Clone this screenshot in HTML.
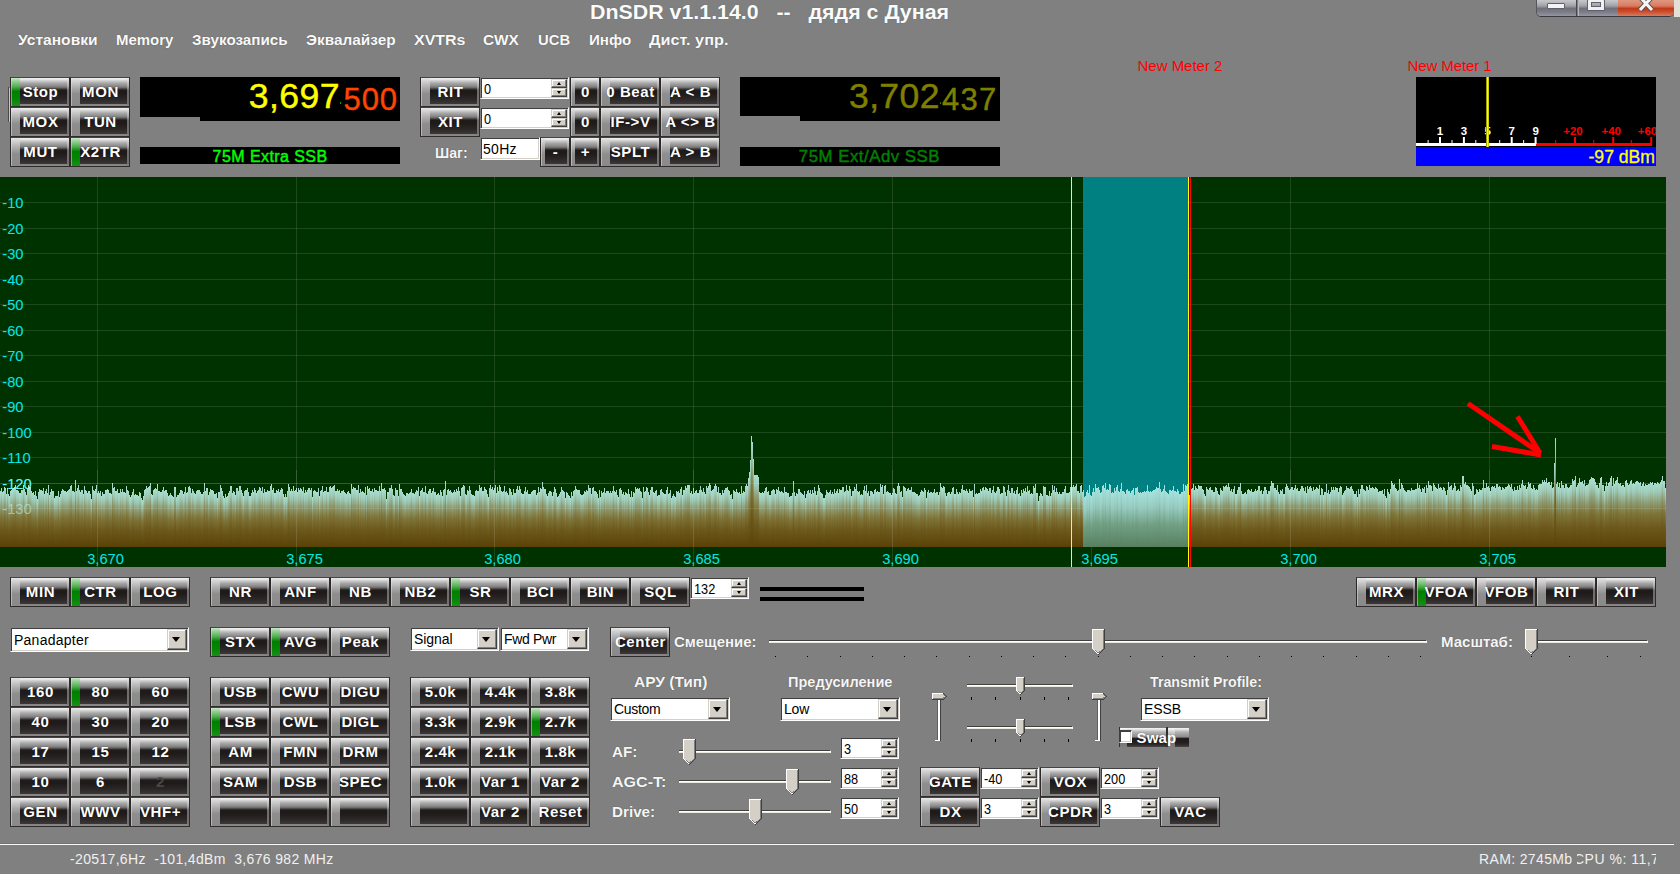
<!DOCTYPE html><html><head><meta charset="utf-8"><title>DnSDR</title><style>
*{margin:0;padding:0;box-sizing:border-box}
html,body{width:1680px;height:874px;overflow:hidden;background:#808080}
body{position:relative;font-family:"Liberation Sans",sans-serif;font-size:14px;color:#000}
.a{position:absolute}
/* skinned button */
.b{position:absolute;width:60px;height:30px;border:1px solid;border-color:#454343 #302c2c #302c2c #2c2828;overflow:hidden;letter-spacing:.6px;
 color:#fff;font-weight:bold;font-size:15px;line-height:28px;text-align:center;white-space:nowrap;
 background:linear-gradient(to bottom,#eee 0,#e8e8e8 5%,#d2d2d2 9%,#a8a8a8 18.5%,#8c8a8a 28.6%,#6e6c6c 34.4%,#454141 38.6%,#1f1b1b 43.5%,#1f1b1b 55%,#2b2727 75%,#3a3636 91%,#464242 92.5%,#858383 94%,#8a8888 100%);
 text-shadow:0 0 1px rgba(0,0,0,.55)}
.b:before{content:"";position:absolute;left:0;top:0;bottom:-1px;width:15.5%;box-shadow:inset 1px 0 0 rgba(235,235,235,.45);
 background:linear-gradient(to bottom,#e6e6e6 0,#d0d0d0 12%,#aaa 35%,#8e8e8e 55%,#8a8a8a 92%,#8c8c8c 100%)}
.b:after{content:"";position:absolute;right:0;top:0;bottom:0;width:2px;
 background:linear-gradient(to bottom,#e8e8e8 0,#b0b0b0 30%,#7c7a7a 45%,#7e7c7c 100%);opacity:.85}
.b.on:before{background:linear-gradient(to bottom,#c8e8c8 0,#9ad29a 10%,#4fae4f 30%,#008000 46%,#038503 70%,#1e901e 100%)}
.b.dis{color:#4a4646;text-shadow:none}
.b span{position:relative;z-index:2;left:.5px}
.b.n{width:30px}
/* classic win controls */
.sp,.cb,.tb{position:absolute;background:#fff;border:1px solid;border-color:#808080 #fff #fff #808080;
 box-shadow:inset 1px 1px 0 #404040,inset -1px -1px 0 #d4d0c8;font-size:14px;line-height:22px;padding-left:3px;white-space:nowrap;overflow:hidden}
.sb{position:absolute;right:1px;width:16px;height:9px;background:#d4d0c8;border:1px solid;border-color:#d4d0c8 #404040 #404040 #d4d0c8;box-shadow:inset -1px -1px 0 #808080,inset 1px 1px 0 #fff}
.sb i{position:absolute;left:4.5px;width:0;height:0;border-left:2.5px solid transparent;border-right:2.5px solid transparent}
.sb.u{top:1px}.sb.d{top:10px}
.sb.u i{top:2px;border-bottom:3px solid #000}
.sb.d i{top:2px;border-top:3px solid #000}
.db{position:absolute;right:1px;top:1px;bottom:1px;width:20px;background:#d4d0c8;border:1px solid;border-color:#d4d0c8 #404040 #404040 #d4d0c8;box-shadow:inset -1px -1px 0 #808080,inset 1px 1px 0 #fff}
.db i{position:absolute;left:4px;top:7px;width:0;height:0;border-left:4px solid transparent;border-right:4px solid transparent;border-top:5px solid #000}
.dg{display:inline-block;transform:scaleX(.91);transform-origin:0 50%}
.l{position:absolute;color:#f6f6f6;font-weight:bold;font-size:14px;line-height:16px;white-space:nowrap;text-shadow:0 0 1px rgba(40,40,40,.6)}
.m{position:absolute;color:#fafafa;font-weight:bold;font-size:14px;line-height:16px;white-space:nowrap;top:32px;text-shadow:0 0 1px rgba(40,40,40,.6)}
.pl{position:absolute;color:#00e8e8;font-size:14.7px;line-height:14px;white-space:nowrap}
</style></head><body>
<div class="a" style="left:590px;top:0;width:380px;height:24px;color:#fbfbfb;font-weight:bold;font-size:20px;line-height:24px;white-space:pre;text-shadow:0 0 1px rgba(60,60,60,.5);transform:scaleX(1.0686);transform-origin:0 0" id="title">DnSDR v1.1.14.0   --   дядя с Дуная</div>
<div class="m" style="left:17.8px;top:32px;transform:scaleX(1.1135);transform-origin:0 0">Установки</div>
<div class="m" style="left:115.8px;top:32px;transform:scaleX(1.0692);transform-origin:0 0">Memory</div>
<div class="m" style="left:191.8px;top:32px;transform:scaleX(1.0871);transform-origin:0 0">Звукозапись</div>
<div class="m" style="left:305.8px;top:32px;transform:scaleX(1.0983);transform-origin:0 0">Эквалайзер</div>
<div class="m" style="left:413.6px;top:32px;transform:scaleX(1.1391);transform-origin:0 0">XVTRs</div>
<div class="m" style="left:483.2px;top:32px;transform:scaleX(1.0957);transform-origin:0 0">CWX</div>
<div class="m" style="left:537.5px;top:32px;transform:scaleX(1.0579);transform-origin:0 0">UCB</div>
<div class="m" style="left:588.5px;top:32px;transform:scaleX(1.0807);transform-origin:0 0">Инфо</div>
<div class="m" style="left:648.8px;top:32px;transform:scaleX(1.1597);transform-origin:0 0">Дист. упр.</div>
<div class="a" style="left:1536px;top:0;width:138px;height:17px;border-radius:0 0 5px 5px;overflow:hidden;border-bottom:1px solid #3a3a40;border-left:1px solid #55555c"><div class="a" style="left:0;top:0;width:40px;height:17px;background:linear-gradient(#c8c8cc 0,#a0a0a8 35%,#70707c 50%,#7c7c88 70%,#9c9ca4 100%);border-right:1px solid #45454c"></div><div class="a" style="left:41px;top:0;width:40px;height:17px;background:linear-gradient(#c8c8cc 0,#a0a0a8 35%,#70707c 50%,#7c7c88 70%,#9c9ca4 100%);border-left:1px solid #b8b8c0"></div><div class="a" style="left:81px;top:0;width:57px;height:17px;background:linear-gradient(#e09880 0,#d87c60 35%,#c23a1c 50%,#c84828 65%,#dc8466 100%)"></div><div class="a" style="left:10px;top:3px;width:18px;height:6px;background:#f4f4f4;border:1px solid #60606c;border-radius:1px"></div><div class="a" style="left:51px;top:-1px;width:16px;height:11px;border:3px solid #f0f0f0;outline:1px solid #60606c;box-shadow:inset 0 0 0 1px #60606c"></div><svg class="a" style="left:100px;top:-3px" width="18" height="16" viewBox="0 0 18 16"><path d="M3 0L15 13M15 0L3 13" stroke="#5a4a4a" stroke-width="5" fill="none"/><path d="M3 0L15 13M15 0L3 13" stroke="#f4f4f4" stroke-width="3.2" fill="none"/></svg></div>
<div class="a" style="left:1674px;top:0;width:6px;height:17px;background:#e2dfd6"></div>
<div class="a" style="left:8px;top:87px;width:1px;height:35px;background:#4a4a4a"></div><div class="a" style="left:9px;top:88px;width:1px;height:34px;background:#c8c8c8"></div>
<div class="b on" style="left:10px;top:77px"><span>Stop</span></div>
<div class="b" style="left:70px;top:77px"><span>MON</span></div>
<div class="b" style="left:10px;top:107px"><span>MOX</span></div>
<div class="b" style="left:70px;top:107px"><span>TUN</span></div>
<div class="b" style="left:10px;top:137px"><span>MUT</span></div>
<div class="b on" style="left:70px;top:137px"><span>X2TR</span></div>
<div class="a" style="left:140px;top:77px;width:260px;height:40px;background:#000"></div><div class="a" style="left:200px;top:77px;width:200px;height:44px;background:#000"></div>
<div class="a" id="va1" style="left:248.8px;top:74.4px;color:#ff0;font-size:35.6px;line-height:44px;white-space:nowrap;-webkit-text-stroke:.45px #ff0;letter-spacing:0.43px">3,697</div>
<div class="a" id="va2" style="left:343.6px;top:77.7px;color:#ff4500;font-size:31px;line-height:44px;white-space:nowrap;-webkit-text-stroke:.4px #ff4500;letter-spacing:0.89px">500</div>
<div class="a" style="left:340px;top:102px;width:1px;height:2px;background:#0a0"></div>
<div class="a" style="left:140px;top:147px;width:260px;height:17px;background:#000"></div>
<div class="a" id="ba" style="left:212.6px;top:146.5px;color:#0f0;font-size:16px;line-height:19px;white-space:nowrap;-webkit-text-stroke:.45px #0f0;letter-spacing:0.43px">75M Extra SSB</div>
<div class="b" style="left:420px;top:77px"><span>RIT</span></div>
<div class="b" style="left:420px;top:107px"><span>XIT</span></div>
<div class="sp" style="left:480px;top:77px;width:89px;height:22px"><span class="dg">0</span><div class="sb u"><i></i></div><div class="sb d"><i></i></div></div>
<div class="sp" style="left:480px;top:107px;width:89px;height:22px"><span class="dg">0</span><div class="sb u"><i></i></div><div class="sb d"><i></i></div></div>
<div class="b n" style="left:570px;top:77px"><span>0</span></div>
<div class="b n" style="left:570px;top:107px"><span>0</span></div>
<div class="b" style="left:600px;top:77px"><span>0 Beat</span></div>
<div class="b" style="left:600px;top:107px"><span>IF-&gt;V</span></div>
<div class="b" style="left:600px;top:137px"><span>SPLT</span></div>
<div class="b" style="left:660px;top:77px"><span>A &lt; B</span></div>
<div class="b" style="left:660px;top:107px"><span>A &lt;&gt; B</span></div>
<div class="b" style="left:660px;top:137px"><span>A &gt; B</span></div>
<div class="b n" style="left:540px;top:137px"><span>-</span></div>
<div class="b n" style="left:570px;top:137px"><span>+</span></div>
<div class="l" style="left:434.5px;top:145px;transform:scaleX(1.0074);transform-origin:0 0">Шаг:</div>
<div class="tb" style="left:480px;top:137px;width:60px;height:23px;line-height:22px;padding-left:2px;letter-spacing:0.28px">50Hz</div>
<div class="a" style="left:740px;top:77px;width:260px;height:39px;background:#000"></div><div class="a" style="left:800px;top:77px;width:200px;height:44px;background:#000"></div>
<div class="a" id="vb1" style="left:849px;top:74.4px;color:#808000;font-size:35.6px;line-height:44px;white-space:nowrap;-webkit-text-stroke:.45px #808000;letter-spacing:0.35px">3,702</div>
<div class="a" id="vb2" style="left:942px;top:77.7px;color:#808000;font-size:31px;line-height:44px;white-space:nowrap;-webkit-text-stroke:.4px #808000;letter-spacing:1.26px">437</div>
<div class="a" style="left:940px;top:102px;width:1px;height:2px;background:#606000"></div>
<div class="a" style="left:740px;top:147px;width:260px;height:19px;background:#000"></div>
<div class="a" id="bb" style="left:798.8px;top:147px;color:#008000;font-size:16.8px;line-height:19px;white-space:nowrap;-webkit-text-stroke:.45px #008000;letter-spacing:0.52px">75M Ext/Adv SSB</div>
<div class="a" style="left:1137.5px;top:57px;color:#f00;font-size:15px;line-height:17px;white-space:nowrap;letter-spacing:-0.01px" id="nm2">New Meter 2</div>
<div class="a" style="left:1407.5px;top:57px;color:#f00;font-size:15px;line-height:17px;white-space:nowrap;letter-spacing:-0.10px" id="nm1">New Meter 1</div>
<svg class="a" style="left:1416px;top:77px" width="240" height="89" viewBox="0 0 240 89"><rect width="240" height="70" fill="#000"/><rect y="70" width="240" height="19" fill="#00f"/><rect x="0" y="66" width="120" height="3" fill="#fff"/><rect x="120" y="66" width="116" height="3" fill="#f00"/><rect x="11.6" y="63" width="1" height="4" fill="#fff"/><rect x="23.0" y="60" width="2" height="7" fill="#fff"/><rect x="35.5" y="63" width="1" height="4" fill="#fff"/><rect x="46.9" y="60" width="2" height="7" fill="#fff"/><rect x="59.3" y="63" width="1" height="4" fill="#fff"/><rect x="70.8" y="60" width="2" height="7" fill="#fff"/><rect x="83.2" y="63" width="1" height="4" fill="#fff"/><rect x="94.7" y="60" width="2" height="7" fill="#fff"/><rect x="107.1" y="63" width="1" height="4" fill="#fff"/><rect x="118.6" y="60" width="2" height="7" fill="#fff"/><rect x="139.2" y="63" width="1" height="4" fill="#f00"/><rect x="158.0" y="60" width="2" height="7" fill="#f00"/><rect x="177.2" y="63" width="1" height="4" fill="#f00"/><rect x="196.2" y="60" width="2" height="7" fill="#f00"/><rect x="214.8" y="63" width="1" height="4" fill="#f00"/><rect x="234.2" y="60" width="2" height="7" fill="#f00"/><g font-family="Liberation Sans" font-weight="bold" font-size="11.5" text-anchor="middle"><text x="24.0" y="58" fill="#fff">1</text><text x="47.9" y="58" fill="#fff">3</text><text x="71.8" y="58" fill="#fff">5</text><text x="95.7" y="58" fill="#fff">7</text><text x="119.6" y="58" fill="#fff">9</text><text x="157.0" y="58" fill="#f00">+20</text><text x="195.2" y="58" fill="#f00">+40</text><text x="231.5" y="58" fill="#f00">+60</text></g><rect x="70" y="0" width="3" height="70" fill="#ff0"/><rect x="70" y="0" width="1" height="70" fill="#a0a000"/><rect x="72.5" y="0" width=".5" height="70" fill="#a0a000"/><text x="239" y="86" fill="#ff0" font-family="Liberation Sans" font-size="17.6" text-anchor="end" stroke="#ff0" stroke-width=".3">-97 dBm</text></svg>
<svg class="a" style="left:0;top:177px" width="1666" height="390" viewBox="0 177 1666 390" shape-rendering="crispEdges"><defs><linearGradient id="g" x1="0" y1="0" x2="0" y2="1"><stop offset="0" stop-color="#aadfd3"/><stop offset=".14" stop-color="#9ecab6"/><stop offset=".30" stop-color="#8e9c74"/><stop offset=".48" stop-color="#7e7438"/><stop offset=".68" stop-color="#6e5a1e"/><stop offset="1" stop-color="#5a4206"/></linearGradient><linearGradient id="g2" x1="0" y1="0" x2="0" y2="1"><stop offset="0" stop-color="#a6e2de"/><stop offset=".3" stop-color="#96cabe"/><stop offset=".6" stop-color="#72a084"/><stop offset="1" stop-color="#588060"/></linearGradient></defs><rect x="0" y="177" width="1666" height="390" fill="#003200"/><rect x="0" y="202" width="1666" height="1" fill="#fff" fill-opacity=".11"/><rect x="0" y="228" width="1666" height="1" fill="#fff" fill-opacity=".11"/><rect x="0" y="253" width="1666" height="1" fill="#fff" fill-opacity=".11"/><rect x="0" y="279" width="1666" height="1" fill="#fff" fill-opacity=".11"/><rect x="0" y="304" width="1666" height="1" fill="#fff" fill-opacity=".11"/><rect x="0" y="330" width="1666" height="1" fill="#fff" fill-opacity=".11"/><rect x="0" y="355" width="1666" height="1" fill="#fff" fill-opacity=".11"/><rect x="0" y="381" width="1666" height="1" fill="#fff" fill-opacity=".11"/><rect x="0" y="406" width="1666" height="1" fill="#fff" fill-opacity=".11"/><rect x="0" y="432" width="1666" height="1" fill="#fff" fill-opacity=".11"/><rect x="0" y="457" width="1666" height="1" fill="#fff" fill-opacity=".11"/><rect x="0" y="483" width="1666" height="1" fill="#fff" fill-opacity=".11"/><rect x="0" y="508" width="1666" height="1" fill="#fff" fill-opacity=".11"/><rect x="97" y="177" width="1" height="390" fill="#fff" fill-opacity=".11"/><rect x="296" y="177" width="1" height="390" fill="#fff" fill-opacity=".11"/><rect x="494" y="177" width="1" height="390" fill="#fff" fill-opacity=".11"/><rect x="693" y="177" width="1" height="390" fill="#fff" fill-opacity=".11"/><rect x="892" y="177" width="1" height="390" fill="#fff" fill-opacity=".11"/><rect x="1091" y="177" width="1" height="390" fill="#fff" fill-opacity=".11"/><rect x="1290" y="177" width="1" height="390" fill="#fff" fill-opacity=".11"/><rect x="1489" y="177" width="1" height="390" fill="#fff" fill-opacity=".11"/><rect x="1083" y="177" width="105" height="370" fill="#008080"/><text x="2.3" y="489" font-family="Liberation Sans" font-size="14.7" fill="#00e8e8" shape-rendering="auto">-120</text><text x="2.3" y="514" font-family="Liberation Sans" font-size="14.7" fill="#00e8e8" shape-rendering="auto">-130</text><g fill="url(#g)"><rect x="0" y="491" width="1" height="56"/><rect x="1" y="488" width="1" height="59"/><rect x="2" y="492" width="1" height="55"/><rect x="3" y="491" width="1" height="56"/><rect x="4" y="487" width="1" height="60"/><rect x="5" y="488" width="1" height="59"/><rect x="6" y="494" width="1" height="53"/><rect x="7" y="488" width="1" height="59"/><rect x="8" y="494" width="1" height="53"/><rect x="9" y="496" width="1" height="51"/><rect x="10" y="491" width="1" height="56"/><rect x="11" y="490" width="1" height="57"/><rect x="12" y="489" width="1" height="58"/><rect x="13" y="488" width="1" height="59"/><rect x="14" y="487" width="1" height="60"/><rect x="15" y="485" width="1" height="62"/><rect x="16" y="490" width="1" height="57"/><rect x="17" y="490" width="1" height="57"/><rect x="18" y="491" width="1" height="56"/><rect x="19" y="493" width="1" height="54"/><rect x="20" y="493" width="1" height="54"/><rect x="21" y="490" width="1" height="57"/><rect x="22" y="490" width="1" height="57"/><rect x="23" y="485" width="1" height="62"/><rect x="24" y="489" width="1" height="58"/><rect x="25" y="492" width="1" height="55"/><rect x="26" y="495" width="1" height="52"/><rect x="27" y="489" width="1" height="58"/><rect x="28" y="485" width="1" height="62"/><rect x="29" y="487" width="1" height="60"/><rect x="30" y="487" width="1" height="60"/><rect x="31" y="491" width="1" height="56"/><rect x="32" y="493" width="1" height="54"/><rect x="33" y="492" width="1" height="55"/><rect x="34" y="495" width="1" height="52"/><rect x="35" y="491" width="1" height="56"/><rect x="36" y="496" width="1" height="51"/><rect x="37" y="499" width="1" height="48"/><rect x="38" y="492" width="1" height="55"/><rect x="39" y="489" width="1" height="58"/><rect x="40" y="490" width="1" height="57"/><rect x="41" y="490" width="1" height="57"/><rect x="42" y="491" width="1" height="56"/><rect x="43" y="488" width="1" height="59"/><rect x="44" y="494" width="1" height="53"/><rect x="45" y="491" width="1" height="56"/><rect x="46" y="489" width="1" height="58"/><rect x="47" y="493" width="1" height="54"/><rect x="48" y="485" width="1" height="62"/><rect x="49" y="495" width="1" height="52"/><rect x="50" y="492" width="1" height="55"/><rect x="51" y="489" width="1" height="58"/><rect x="52" y="491" width="1" height="56"/><rect x="53" y="491" width="1" height="56"/><rect x="54" y="498" width="1" height="49"/><rect x="55" y="496" width="1" height="51"/><rect x="56" y="496" width="1" height="51"/><rect x="57" y="496" width="1" height="51"/><rect x="58" y="491" width="1" height="56"/><rect x="59" y="497" width="1" height="50"/><rect x="60" y="494" width="1" height="53"/><rect x="61" y="491" width="1" height="56"/><rect x="62" y="489" width="1" height="58"/><rect x="63" y="490" width="1" height="57"/><rect x="64" y="491" width="1" height="56"/><rect x="65" y="491" width="1" height="56"/><rect x="66" y="492" width="1" height="55"/><rect x="67" y="491" width="1" height="56"/><rect x="68" y="490" width="1" height="57"/><rect x="69" y="489" width="1" height="58"/><rect x="70" y="486" width="1" height="61"/><rect x="71" y="485" width="1" height="62"/><rect x="72" y="491" width="1" height="56"/><rect x="73" y="491" width="1" height="56"/><rect x="74" y="492" width="1" height="55"/><rect x="75" y="480" width="1" height="67"/><rect x="76" y="491" width="1" height="56"/><rect x="77" y="488" width="1" height="59"/><rect x="78" y="485" width="1" height="62"/><rect x="79" y="490" width="1" height="57"/><rect x="80" y="492" width="1" height="55"/><rect x="81" y="490" width="1" height="57"/><rect x="82" y="490" width="1" height="57"/><rect x="83" y="494" width="1" height="53"/><rect x="84" y="486" width="1" height="61"/><rect x="85" y="490" width="1" height="57"/><rect x="86" y="491" width="1" height="56"/><rect x="87" y="493" width="1" height="54"/><rect x="88" y="491" width="1" height="56"/><rect x="89" y="491" width="1" height="56"/><rect x="90" y="494" width="1" height="53"/><rect x="91" y="499" width="1" height="48"/><rect x="92" y="486" width="1" height="61"/><rect x="93" y="490" width="1" height="57"/><rect x="94" y="491" width="1" height="56"/><rect x="95" y="489" width="1" height="58"/><rect x="96" y="485" width="1" height="62"/><rect x="97" y="493" width="1" height="54"/><rect x="98" y="491" width="1" height="56"/><rect x="99" y="493" width="1" height="54"/><rect x="100" y="491" width="1" height="56"/><rect x="101" y="496" width="1" height="51"/><rect x="102" y="492" width="1" height="55"/><rect x="103" y="494" width="1" height="53"/><rect x="104" y="494" width="1" height="53"/><rect x="105" y="490" width="1" height="57"/><rect x="106" y="490" width="1" height="57"/><rect x="107" y="489" width="1" height="58"/><rect x="108" y="490" width="1" height="57"/><rect x="109" y="493" width="1" height="54"/><rect x="110" y="493" width="1" height="54"/><rect x="111" y="494" width="1" height="53"/><rect x="112" y="483" width="1" height="64"/><rect x="113" y="488" width="1" height="59"/><rect x="114" y="487" width="1" height="60"/><rect x="115" y="491" width="1" height="56"/><rect x="116" y="491" width="1" height="56"/><rect x="117" y="489" width="1" height="58"/><rect x="118" y="493" width="1" height="54"/><rect x="119" y="493" width="1" height="54"/><rect x="120" y="489" width="1" height="58"/><rect x="121" y="492" width="1" height="55"/><rect x="122" y="489" width="1" height="58"/><rect x="123" y="492" width="1" height="55"/><rect x="124" y="492" width="1" height="55"/><rect x="125" y="493" width="1" height="54"/><rect x="126" y="486" width="1" height="61"/><rect x="127" y="490" width="1" height="57"/><rect x="128" y="491" width="1" height="56"/><rect x="129" y="495" width="1" height="52"/><rect x="130" y="497" width="1" height="50"/><rect x="131" y="495" width="1" height="52"/><rect x="132" y="492" width="1" height="55"/><rect x="133" y="489" width="1" height="58"/><rect x="134" y="495" width="1" height="52"/><rect x="135" y="494" width="1" height="53"/><rect x="136" y="495" width="1" height="52"/><rect x="137" y="495" width="1" height="52"/><rect x="138" y="496" width="1" height="51"/><rect x="139" y="492" width="1" height="55"/><rect x="140" y="493" width="1" height="54"/><rect x="141" y="498" width="1" height="49"/><rect x="142" y="500" width="1" height="47"/><rect x="143" y="496" width="1" height="51"/><rect x="144" y="490" width="1" height="57"/><rect x="145" y="489" width="1" height="58"/><rect x="146" y="486" width="1" height="61"/><rect x="147" y="488" width="1" height="59"/><rect x="148" y="487" width="1" height="60"/><rect x="149" y="486" width="1" height="61"/><rect x="150" y="483" width="1" height="64"/><rect x="151" y="494" width="1" height="53"/><rect x="152" y="495" width="1" height="52"/><rect x="153" y="490" width="1" height="57"/><rect x="154" y="489" width="1" height="58"/><rect x="155" y="488" width="1" height="59"/><rect x="156" y="489" width="1" height="58"/><rect x="157" y="484" width="1" height="63"/><rect x="158" y="491" width="1" height="56"/><rect x="159" y="491" width="1" height="56"/><rect x="160" y="492" width="1" height="55"/><rect x="161" y="492" width="1" height="55"/><rect x="162" y="490" width="1" height="57"/><rect x="163" y="487" width="1" height="60"/><rect x="164" y="491" width="1" height="56"/><rect x="165" y="490" width="1" height="57"/><rect x="166" y="490" width="1" height="57"/><rect x="167" y="493" width="1" height="54"/><rect x="168" y="496" width="1" height="51"/><rect x="169" y="495" width="1" height="52"/><rect x="170" y="493" width="1" height="54"/><rect x="171" y="495" width="1" height="52"/><rect x="172" y="496" width="1" height="51"/><rect x="173" y="497" width="1" height="50"/><rect x="174" y="487" width="1" height="60"/><rect x="175" y="487" width="1" height="60"/><rect x="176" y="497" width="1" height="50"/><rect x="177" y="495" width="1" height="52"/><rect x="178" y="495" width="1" height="52"/><rect x="179" y="493" width="1" height="54"/><rect x="180" y="490" width="1" height="57"/><rect x="181" y="490" width="1" height="57"/><rect x="182" y="491" width="1" height="56"/><rect x="183" y="494" width="1" height="53"/><rect x="184" y="492" width="1" height="55"/><rect x="185" y="487" width="1" height="60"/><rect x="186" y="493" width="1" height="54"/><rect x="187" y="492" width="1" height="55"/><rect x="188" y="487" width="1" height="60"/><rect x="189" y="486" width="1" height="61"/><rect x="190" y="488" width="1" height="59"/><rect x="191" y="493" width="1" height="54"/><rect x="192" y="489" width="1" height="58"/><rect x="193" y="491" width="1" height="56"/><rect x="194" y="493" width="1" height="54"/><rect x="195" y="494" width="1" height="53"/><rect x="196" y="491" width="1" height="56"/><rect x="197" y="490" width="1" height="57"/><rect x="198" y="490" width="1" height="57"/><rect x="199" y="490" width="1" height="57"/><rect x="200" y="492" width="1" height="55"/><rect x="201" y="494" width="1" height="53"/><rect x="202" y="494" width="1" height="53"/><rect x="203" y="492" width="1" height="55"/><rect x="204" y="483" width="1" height="64"/><rect x="205" y="491" width="1" height="56"/><rect x="206" y="488" width="1" height="59"/><rect x="207" y="488" width="1" height="59"/><rect x="208" y="495" width="1" height="52"/><rect x="209" y="492" width="1" height="55"/><rect x="210" y="489" width="1" height="58"/><rect x="211" y="490" width="1" height="57"/><rect x="212" y="490" width="1" height="57"/><rect x="213" y="491" width="1" height="56"/><rect x="214" y="494" width="1" height="53"/><rect x="215" y="494" width="1" height="53"/><rect x="216" y="493" width="1" height="54"/><rect x="217" y="498" width="1" height="49"/><rect x="218" y="492" width="1" height="55"/><rect x="219" y="492" width="1" height="55"/><rect x="220" y="485" width="1" height="62"/><rect x="221" y="488" width="1" height="59"/><rect x="222" y="491" width="1" height="56"/><rect x="223" y="496" width="1" height="51"/><rect x="224" y="498" width="1" height="49"/><rect x="225" y="494" width="1" height="53"/><rect x="226" y="497" width="1" height="50"/><rect x="227" y="496" width="1" height="51"/><rect x="228" y="493" width="1" height="54"/><rect x="229" y="491" width="1" height="56"/><rect x="230" y="486" width="1" height="61"/><rect x="231" y="486" width="1" height="61"/><rect x="232" y="493" width="1" height="54"/><rect x="233" y="491" width="1" height="56"/><rect x="234" y="492" width="1" height="55"/><rect x="235" y="495" width="1" height="52"/><rect x="236" y="488" width="1" height="59"/><rect x="237" y="488" width="1" height="59"/><rect x="238" y="491" width="1" height="56"/><rect x="239" y="486" width="1" height="61"/><rect x="240" y="486" width="1" height="61"/><rect x="241" y="490" width="1" height="57"/><rect x="242" y="493" width="1" height="54"/><rect x="243" y="496" width="1" height="51"/><rect x="244" y="491" width="1" height="56"/><rect x="245" y="490" width="1" height="57"/><rect x="246" y="490" width="1" height="57"/><rect x="247" y="488" width="1" height="59"/><rect x="248" y="492" width="1" height="55"/><rect x="249" y="496" width="1" height="51"/><rect x="250" y="496" width="1" height="51"/><rect x="251" y="493" width="1" height="54"/><rect x="252" y="490" width="1" height="57"/><rect x="253" y="492" width="1" height="55"/><rect x="254" y="488" width="1" height="59"/><rect x="255" y="490" width="1" height="57"/><rect x="256" y="493" width="1" height="54"/><rect x="257" y="491" width="1" height="56"/><rect x="258" y="490" width="1" height="57"/><rect x="259" y="487" width="1" height="60"/><rect x="260" y="488" width="1" height="59"/><rect x="261" y="491" width="1" height="56"/><rect x="262" y="487" width="1" height="60"/><rect x="263" y="493" width="1" height="54"/><rect x="264" y="489" width="1" height="58"/><rect x="265" y="492" width="1" height="55"/><rect x="266" y="492" width="1" height="55"/><rect x="267" y="490" width="1" height="57"/><rect x="268" y="491" width="1" height="56"/><rect x="269" y="491" width="1" height="56"/><rect x="270" y="486" width="1" height="61"/><rect x="271" y="484" width="1" height="63"/><rect x="272" y="490" width="1" height="57"/><rect x="273" y="488" width="1" height="59"/><rect x="274" y="493" width="1" height="54"/><rect x="275" y="493" width="1" height="54"/><rect x="276" y="490" width="1" height="57"/><rect x="277" y="491" width="1" height="56"/><rect x="278" y="489" width="1" height="58"/><rect x="279" y="492" width="1" height="55"/><rect x="280" y="490" width="1" height="57"/><rect x="281" y="488" width="1" height="59"/><rect x="282" y="489" width="1" height="58"/><rect x="283" y="494" width="1" height="53"/><rect x="284" y="497" width="1" height="50"/><rect x="285" y="494" width="1" height="53"/><rect x="286" y="497" width="1" height="50"/><rect x="287" y="491" width="1" height="56"/><rect x="288" y="484" width="1" height="63"/><rect x="289" y="487" width="1" height="60"/><rect x="290" y="491" width="1" height="56"/><rect x="291" y="489" width="1" height="58"/><rect x="292" y="491" width="1" height="56"/><rect x="293" y="486" width="1" height="61"/><rect x="294" y="491" width="1" height="56"/><rect x="295" y="490" width="1" height="57"/><rect x="296" y="488" width="1" height="59"/><rect x="297" y="492" width="1" height="55"/><rect x="298" y="488" width="1" height="59"/><rect x="299" y="490" width="1" height="57"/><rect x="300" y="488" width="1" height="59"/><rect x="301" y="489" width="1" height="58"/><rect x="302" y="491" width="1" height="56"/><rect x="303" y="487" width="1" height="60"/><rect x="304" y="493" width="1" height="54"/><rect x="305" y="490" width="1" height="57"/><rect x="306" y="492" width="1" height="55"/><rect x="307" y="490" width="1" height="57"/><rect x="308" y="488" width="1" height="59"/><rect x="309" y="488" width="1" height="59"/><rect x="310" y="490" width="1" height="57"/><rect x="311" y="488" width="1" height="59"/><rect x="312" y="497" width="1" height="50"/><rect x="313" y="491" width="1" height="56"/><rect x="314" y="490" width="1" height="57"/><rect x="315" y="491" width="1" height="56"/><rect x="316" y="492" width="1" height="55"/><rect x="317" y="492" width="1" height="55"/><rect x="318" y="488" width="1" height="59"/><rect x="319" y="496" width="1" height="51"/><rect x="320" y="491" width="1" height="56"/><rect x="321" y="490" width="1" height="57"/><rect x="322" y="486" width="1" height="61"/><rect x="323" y="492" width="1" height="55"/><rect x="324" y="491" width="1" height="56"/><rect x="325" y="491" width="1" height="56"/><rect x="326" y="487" width="1" height="60"/><rect x="327" y="492" width="1" height="55"/><rect x="328" y="492" width="1" height="55"/><rect x="329" y="487" width="1" height="60"/><rect x="330" y="486" width="1" height="61"/><rect x="331" y="488" width="1" height="59"/><rect x="332" y="487" width="1" height="60"/><rect x="333" y="486" width="1" height="61"/><rect x="334" y="485" width="1" height="62"/><rect x="335" y="491" width="1" height="56"/><rect x="336" y="491" width="1" height="56"/><rect x="337" y="489" width="1" height="58"/><rect x="338" y="491" width="1" height="56"/><rect x="339" y="490" width="1" height="57"/><rect x="340" y="493" width="1" height="54"/><rect x="341" y="491" width="1" height="56"/><rect x="342" y="491" width="1" height="56"/><rect x="343" y="490" width="1" height="57"/><rect x="344" y="492" width="1" height="55"/><rect x="345" y="493" width="1" height="54"/><rect x="346" y="494" width="1" height="53"/><rect x="347" y="492" width="1" height="55"/><rect x="348" y="491" width="1" height="56"/><rect x="349" y="493" width="1" height="54"/><rect x="350" y="494" width="1" height="53"/><rect x="351" y="484" width="1" height="63"/><rect x="352" y="489" width="1" height="58"/><rect x="353" y="487" width="1" height="60"/><rect x="354" y="488" width="1" height="59"/><rect x="355" y="488" width="1" height="59"/><rect x="356" y="490" width="1" height="57"/><rect x="357" y="490" width="1" height="57"/><rect x="358" y="485" width="1" height="62"/><rect x="359" y="493" width="1" height="54"/><rect x="360" y="489" width="1" height="58"/><rect x="361" y="492" width="1" height="55"/><rect x="362" y="491" width="1" height="56"/><rect x="363" y="492" width="1" height="55"/><rect x="364" y="493" width="1" height="54"/><rect x="365" y="487" width="1" height="60"/><rect x="366" y="495" width="1" height="52"/><rect x="367" y="486" width="1" height="61"/><rect x="368" y="489" width="1" height="58"/><rect x="369" y="488" width="1" height="59"/><rect x="370" y="491" width="1" height="56"/><rect x="371" y="491" width="1" height="56"/><rect x="372" y="489" width="1" height="58"/><rect x="373" y="492" width="1" height="55"/><rect x="374" y="488" width="1" height="59"/><rect x="375" y="490" width="1" height="57"/><rect x="376" y="490" width="1" height="57"/><rect x="377" y="491" width="1" height="56"/><rect x="378" y="491" width="1" height="56"/><rect x="379" y="486" width="1" height="61"/><rect x="380" y="491" width="1" height="56"/><rect x="381" y="483" width="1" height="64"/><rect x="382" y="489" width="1" height="58"/><rect x="383" y="489" width="1" height="58"/><rect x="384" y="488" width="1" height="59"/><rect x="385" y="490" width="1" height="57"/><rect x="386" y="499" width="1" height="48"/><rect x="387" y="492" width="1" height="55"/><rect x="388" y="492" width="1" height="55"/><rect x="389" y="488" width="1" height="59"/><rect x="390" y="488" width="1" height="59"/><rect x="391" y="485" width="1" height="62"/><rect x="392" y="489" width="1" height="58"/><rect x="393" y="495" width="1" height="52"/><rect x="394" y="496" width="1" height="51"/><rect x="395" y="488" width="1" height="59"/><rect x="396" y="490" width="1" height="57"/><rect x="397" y="490" width="1" height="57"/><rect x="398" y="496" width="1" height="51"/><rect x="399" y="484" width="1" height="63"/><rect x="400" y="489" width="1" height="58"/><rect x="401" y="489" width="1" height="58"/><rect x="402" y="492" width="1" height="55"/><rect x="403" y="494" width="1" height="53"/><rect x="404" y="495" width="1" height="52"/><rect x="405" y="496" width="1" height="51"/><rect x="406" y="493" width="1" height="54"/><rect x="407" y="493" width="1" height="54"/><rect x="408" y="494" width="1" height="53"/><rect x="409" y="493" width="1" height="54"/><rect x="410" y="492" width="1" height="55"/><rect x="411" y="489" width="1" height="58"/><rect x="412" y="493" width="1" height="54"/><rect x="413" y="493" width="1" height="54"/><rect x="414" y="494" width="1" height="53"/><rect x="415" y="492" width="1" height="55"/><rect x="416" y="490" width="1" height="57"/><rect x="417" y="491" width="1" height="56"/><rect x="418" y="487" width="1" height="60"/><rect x="419" y="496" width="1" height="51"/><rect x="420" y="491" width="1" height="56"/><rect x="421" y="490" width="1" height="57"/><rect x="422" y="488" width="1" height="59"/><rect x="423" y="492" width="1" height="55"/><rect x="424" y="492" width="1" height="55"/><rect x="425" y="486" width="1" height="61"/><rect x="426" y="493" width="1" height="54"/><rect x="427" y="494" width="1" height="53"/><rect x="428" y="491" width="1" height="56"/><rect x="429" y="489" width="1" height="58"/><rect x="430" y="489" width="1" height="58"/><rect x="431" y="493" width="1" height="54"/><rect x="432" y="491" width="1" height="56"/><rect x="433" y="488" width="1" height="59"/><rect x="434" y="492" width="1" height="55"/><rect x="435" y="492" width="1" height="55"/><rect x="436" y="495" width="1" height="52"/><rect x="437" y="494" width="1" height="53"/><rect x="438" y="493" width="1" height="54"/><rect x="439" y="495" width="1" height="52"/><rect x="440" y="490" width="1" height="57"/><rect x="441" y="492" width="1" height="55"/><rect x="442" y="496" width="1" height="51"/><rect x="443" y="490" width="1" height="57"/><rect x="444" y="489" width="1" height="58"/><rect x="445" y="481" width="1" height="66"/><rect x="446" y="495" width="1" height="52"/><rect x="447" y="490" width="1" height="57"/><rect x="448" y="489" width="1" height="58"/><rect x="449" y="491" width="1" height="56"/><rect x="450" y="490" width="1" height="57"/><rect x="451" y="492" width="1" height="55"/><rect x="452" y="493" width="1" height="54"/><rect x="453" y="492" width="1" height="55"/><rect x="454" y="490" width="1" height="57"/><rect x="455" y="492" width="1" height="55"/><rect x="456" y="489" width="1" height="58"/><rect x="457" y="491" width="1" height="56"/><rect x="458" y="487" width="1" height="60"/><rect x="459" y="491" width="1" height="56"/><rect x="460" y="496" width="1" height="51"/><rect x="461" y="488" width="1" height="59"/><rect x="462" y="487" width="1" height="60"/><rect x="463" y="485" width="1" height="62"/><rect x="464" y="486" width="1" height="61"/><rect x="465" y="494" width="1" height="53"/><rect x="466" y="495" width="1" height="52"/><rect x="467" y="490" width="1" height="57"/><rect x="468" y="491" width="1" height="56"/><rect x="469" y="486" width="1" height="61"/><rect x="470" y="490" width="1" height="57"/><rect x="471" y="494" width="1" height="53"/><rect x="472" y="495" width="1" height="52"/><rect x="473" y="495" width="1" height="52"/><rect x="474" y="496" width="1" height="51"/><rect x="475" y="491" width="1" height="56"/><rect x="476" y="490" width="1" height="57"/><rect x="477" y="491" width="1" height="56"/><rect x="478" y="491" width="1" height="56"/><rect x="479" y="485" width="1" height="62"/><rect x="480" y="488" width="1" height="59"/><rect x="481" y="487" width="1" height="60"/><rect x="482" y="491" width="1" height="56"/><rect x="483" y="491" width="1" height="56"/><rect x="484" y="487" width="1" height="60"/><rect x="485" y="489" width="1" height="58"/><rect x="486" y="490" width="1" height="57"/><rect x="487" y="494" width="1" height="53"/><rect x="488" y="497" width="1" height="50"/><rect x="489" y="488" width="1" height="59"/><rect x="490" y="485" width="1" height="62"/><rect x="491" y="489" width="1" height="58"/><rect x="492" y="487" width="1" height="60"/><rect x="493" y="490" width="1" height="57"/><rect x="494" y="488" width="1" height="59"/><rect x="495" y="485" width="1" height="62"/><rect x="496" y="493" width="1" height="54"/><rect x="497" y="487" width="1" height="60"/><rect x="498" y="491" width="1" height="56"/><rect x="499" y="485" width="1" height="62"/><rect x="500" y="487" width="1" height="60"/><rect x="501" y="491" width="1" height="56"/><rect x="502" y="492" width="1" height="55"/><rect x="503" y="491" width="1" height="56"/><rect x="504" y="486" width="1" height="61"/><rect x="505" y="492" width="1" height="55"/><rect x="506" y="491" width="1" height="56"/><rect x="507" y="493" width="1" height="54"/><rect x="508" y="495" width="1" height="52"/><rect x="509" y="488" width="1" height="59"/><rect x="510" y="489" width="1" height="58"/><rect x="511" y="492" width="1" height="55"/><rect x="512" y="495" width="1" height="52"/><rect x="513" y="489" width="1" height="58"/><rect x="514" y="493" width="1" height="54"/><rect x="515" y="493" width="1" height="54"/><rect x="516" y="489" width="1" height="58"/><rect x="517" y="486" width="1" height="61"/><rect x="518" y="490" width="1" height="57"/><rect x="519" y="486" width="1" height="61"/><rect x="520" y="489" width="1" height="58"/><rect x="521" y="493" width="1" height="54"/><rect x="522" y="494" width="1" height="53"/><rect x="523" y="494" width="1" height="53"/><rect x="524" y="491" width="1" height="56"/><rect x="525" y="487" width="1" height="60"/><rect x="526" y="492" width="1" height="55"/><rect x="527" y="490" width="1" height="57"/><rect x="528" y="494" width="1" height="53"/><rect x="529" y="494" width="1" height="53"/><rect x="530" y="494" width="1" height="53"/><rect x="531" y="492" width="1" height="55"/><rect x="532" y="491" width="1" height="56"/><rect x="533" y="490" width="1" height="57"/><rect x="534" y="490" width="1" height="57"/><rect x="535" y="490" width="1" height="57"/><rect x="536" y="495" width="1" height="52"/><rect x="537" y="493" width="1" height="54"/><rect x="538" y="487" width="1" height="60"/><rect x="539" y="492" width="1" height="55"/><rect x="540" y="488" width="1" height="59"/><rect x="541" y="489" width="1" height="58"/><rect x="542" y="482" width="1" height="65"/><rect x="543" y="487" width="1" height="60"/><rect x="544" y="489" width="1" height="58"/><rect x="545" y="489" width="1" height="58"/><rect x="546" y="494" width="1" height="53"/><rect x="547" y="496" width="1" height="51"/><rect x="548" y="493" width="1" height="54"/><rect x="549" y="491" width="1" height="56"/><rect x="550" y="491" width="1" height="56"/><rect x="551" y="492" width="1" height="55"/><rect x="552" y="496" width="1" height="51"/><rect x="553" y="492" width="1" height="55"/><rect x="554" y="487" width="1" height="60"/><rect x="555" y="489" width="1" height="58"/><rect x="556" y="493" width="1" height="54"/><rect x="557" y="497" width="1" height="50"/><rect x="558" y="496" width="1" height="51"/><rect x="559" y="494" width="1" height="53"/><rect x="560" y="492" width="1" height="55"/><rect x="561" y="487" width="1" height="60"/><rect x="562" y="490" width="1" height="57"/><rect x="563" y="491" width="1" height="56"/><rect x="564" y="492" width="1" height="55"/><rect x="565" y="498" width="1" height="49"/><rect x="566" y="492" width="1" height="55"/><rect x="567" y="493" width="1" height="54"/><rect x="568" y="495" width="1" height="52"/><rect x="569" y="496" width="1" height="51"/><rect x="570" y="498" width="1" height="49"/><rect x="571" y="492" width="1" height="55"/><rect x="572" y="496" width="1" height="51"/><rect x="573" y="491" width="1" height="56"/><rect x="574" y="490" width="1" height="57"/><rect x="575" y="486" width="1" height="61"/><rect x="576" y="489" width="1" height="58"/><rect x="577" y="490" width="1" height="57"/><rect x="578" y="490" width="1" height="57"/><rect x="579" y="490" width="1" height="57"/><rect x="580" y="494" width="1" height="53"/><rect x="581" y="495" width="1" height="52"/><rect x="582" y="495" width="1" height="52"/><rect x="583" y="494" width="1" height="53"/><rect x="584" y="491" width="1" height="56"/><rect x="585" y="492" width="1" height="55"/><rect x="586" y="490" width="1" height="57"/><rect x="587" y="491" width="1" height="56"/><rect x="588" y="485" width="1" height="62"/><rect x="589" y="488" width="1" height="59"/><rect x="590" y="488" width="1" height="59"/><rect x="591" y="494" width="1" height="53"/><rect x="592" y="488" width="1" height="59"/><rect x="593" y="487" width="1" height="60"/><rect x="594" y="491" width="1" height="56"/><rect x="595" y="491" width="1" height="56"/><rect x="596" y="492" width="1" height="55"/><rect x="597" y="494" width="1" height="53"/><rect x="598" y="498" width="1" height="49"/><rect x="599" y="490" width="1" height="57"/><rect x="600" y="497" width="1" height="50"/><rect x="601" y="491" width="1" height="56"/><rect x="602" y="493" width="1" height="54"/><rect x="603" y="492" width="1" height="55"/><rect x="604" y="488" width="1" height="59"/><rect x="605" y="493" width="1" height="54"/><rect x="606" y="491" width="1" height="56"/><rect x="607" y="491" width="1" height="56"/><rect x="608" y="491" width="1" height="56"/><rect x="609" y="493" width="1" height="54"/><rect x="610" y="491" width="1" height="56"/><rect x="611" y="493" width="1" height="54"/><rect x="612" y="491" width="1" height="56"/><rect x="613" y="486" width="1" height="61"/><rect x="614" y="491" width="1" height="56"/><rect x="615" y="492" width="1" height="55"/><rect x="616" y="490" width="1" height="57"/><rect x="617" y="495" width="1" height="52"/><rect x="618" y="497" width="1" height="50"/><rect x="619" y="489" width="1" height="58"/><rect x="620" y="488" width="1" height="59"/><rect x="621" y="490" width="1" height="57"/><rect x="622" y="494" width="1" height="53"/><rect x="623" y="492" width="1" height="55"/><rect x="624" y="495" width="1" height="52"/><rect x="625" y="492" width="1" height="55"/><rect x="626" y="493" width="1" height="54"/><rect x="627" y="494" width="1" height="53"/><rect x="628" y="489" width="1" height="58"/><rect x="629" y="494" width="1" height="53"/><rect x="630" y="497" width="1" height="50"/><rect x="631" y="491" width="1" height="56"/><rect x="632" y="497" width="1" height="50"/><rect x="633" y="492" width="1" height="55"/><rect x="634" y="493" width="1" height="54"/><rect x="635" y="487" width="1" height="60"/><rect x="636" y="489" width="1" height="58"/><rect x="637" y="488" width="1" height="59"/><rect x="638" y="489" width="1" height="58"/><rect x="639" y="488" width="1" height="59"/><rect x="640" y="491" width="1" height="56"/><rect x="641" y="492" width="1" height="55"/><rect x="642" y="498" width="1" height="49"/><rect x="643" y="487" width="1" height="60"/><rect x="644" y="492" width="1" height="55"/><rect x="645" y="491" width="1" height="56"/><rect x="646" y="487" width="1" height="60"/><rect x="647" y="488" width="1" height="59"/><rect x="648" y="492" width="1" height="55"/><rect x="649" y="495" width="1" height="52"/><rect x="650" y="490" width="1" height="57"/><rect x="651" y="487" width="1" height="60"/><rect x="652" y="487" width="1" height="60"/><rect x="653" y="492" width="1" height="55"/><rect x="654" y="493" width="1" height="54"/><rect x="655" y="491" width="1" height="56"/><rect x="656" y="490" width="1" height="57"/><rect x="657" y="496" width="1" height="51"/><rect x="658" y="495" width="1" height="52"/><rect x="659" y="495" width="1" height="52"/><rect x="660" y="490" width="1" height="57"/><rect x="661" y="489" width="1" height="58"/><rect x="662" y="492" width="1" height="55"/><rect x="663" y="493" width="1" height="54"/><rect x="664" y="494" width="1" height="53"/><rect x="665" y="494" width="1" height="53"/><rect x="666" y="490" width="1" height="57"/><rect x="667" y="487" width="1" height="60"/><rect x="668" y="494" width="1" height="53"/><rect x="669" y="493" width="1" height="54"/><rect x="670" y="490" width="1" height="57"/><rect x="671" y="498" width="1" height="49"/><rect x="672" y="496" width="1" height="51"/><rect x="673" y="494" width="1" height="53"/><rect x="674" y="496" width="1" height="51"/><rect x="675" y="497" width="1" height="50"/><rect x="676" y="491" width="1" height="56"/><rect x="677" y="492" width="1" height="55"/><rect x="678" y="491" width="1" height="56"/><rect x="679" y="493" width="1" height="54"/><rect x="680" y="489" width="1" height="58"/><rect x="681" y="487" width="1" height="60"/><rect x="682" y="495" width="1" height="52"/><rect x="683" y="490" width="1" height="57"/><rect x="684" y="490" width="1" height="57"/><rect x="685" y="486" width="1" height="61"/><rect x="686" y="488" width="1" height="59"/><rect x="687" y="485" width="1" height="62"/><rect x="688" y="485" width="1" height="62"/><rect x="689" y="485" width="1" height="62"/><rect x="690" y="493" width="1" height="54"/><rect x="691" y="491" width="1" height="56"/><rect x="692" y="494" width="1" height="53"/><rect x="693" y="488" width="1" height="59"/><rect x="694" y="493" width="1" height="54"/><rect x="695" y="491" width="1" height="56"/><rect x="696" y="490" width="1" height="57"/><rect x="697" y="493" width="1" height="54"/><rect x="698" y="493" width="1" height="54"/><rect x="699" y="490" width="1" height="57"/><rect x="700" y="486" width="1" height="61"/><rect x="701" y="490" width="1" height="57"/><rect x="702" y="492" width="1" height="55"/><rect x="703" y="488" width="1" height="59"/><rect x="704" y="492" width="1" height="55"/><rect x="705" y="494" width="1" height="53"/><rect x="706" y="486" width="1" height="61"/><rect x="707" y="488" width="1" height="59"/><rect x="708" y="486" width="1" height="61"/><rect x="709" y="483" width="1" height="64"/><rect x="710" y="485" width="1" height="62"/><rect x="711" y="491" width="1" height="56"/><rect x="712" y="490" width="1" height="57"/><rect x="713" y="489" width="1" height="58"/><rect x="714" y="486" width="1" height="61"/><rect x="715" y="484" width="1" height="63"/><rect x="716" y="486" width="1" height="61"/><rect x="717" y="492" width="1" height="55"/><rect x="718" y="487" width="1" height="60"/><rect x="719" y="493" width="1" height="54"/><rect x="720" y="493" width="1" height="54"/><rect x="721" y="495" width="1" height="52"/><rect x="722" y="490" width="1" height="57"/><rect x="723" y="493" width="1" height="54"/><rect x="724" y="490" width="1" height="57"/><rect x="725" y="488" width="1" height="59"/><rect x="726" y="488" width="1" height="59"/><rect x="727" y="487" width="1" height="60"/><rect x="728" y="490" width="1" height="57"/><rect x="729" y="491" width="1" height="56"/><rect x="730" y="495" width="1" height="52"/><rect x="731" y="494" width="1" height="53"/><rect x="732" y="499" width="1" height="48"/><rect x="733" y="490" width="1" height="57"/><rect x="734" y="491" width="1" height="56"/><rect x="735" y="492" width="1" height="55"/><rect x="736" y="489" width="1" height="58"/><rect x="737" y="492" width="1" height="55"/><rect x="738" y="493" width="1" height="54"/><rect x="739" y="492" width="1" height="55"/><rect x="740" y="494" width="1" height="53"/><rect x="741" y="486" width="1" height="61"/><rect x="742" y="493" width="1" height="54"/><rect x="743" y="491" width="1" height="56"/><rect x="744" y="492" width="1" height="55"/><rect x="745" y="486" width="1" height="61"/><rect x="746" y="484" width="1" height="63"/><rect x="747" y="486" width="1" height="61"/><rect x="748" y="478" width="1" height="69"/><rect x="749" y="472" width="1" height="75"/><rect x="750" y="460" width="1" height="87"/><rect x="751" y="436" width="1" height="111"/><rect x="752" y="442" width="1" height="105"/><rect x="753" y="459" width="1" height="88"/><rect x="754" y="475" width="1" height="72"/><rect x="755" y="475" width="1" height="72"/><rect x="756" y="475" width="1" height="72"/><rect x="757" y="475" width="1" height="72"/><rect x="758" y="477" width="1" height="70"/><rect x="759" y="492" width="1" height="55"/><rect x="760" y="493" width="1" height="54"/><rect x="761" y="493" width="1" height="54"/><rect x="762" y="492" width="1" height="55"/><rect x="763" y="493" width="1" height="54"/><rect x="764" y="491" width="1" height="56"/><rect x="765" y="488" width="1" height="59"/><rect x="766" y="487" width="1" height="60"/><rect x="767" y="492" width="1" height="55"/><rect x="768" y="491" width="1" height="56"/><rect x="769" y="495" width="1" height="52"/><rect x="770" y="495" width="1" height="52"/><rect x="771" y="491" width="1" height="56"/><rect x="772" y="490" width="1" height="57"/><rect x="773" y="489" width="1" height="58"/><rect x="774" y="490" width="1" height="57"/><rect x="775" y="494" width="1" height="53"/><rect x="776" y="489" width="1" height="58"/><rect x="777" y="490" width="1" height="57"/><rect x="778" y="487" width="1" height="60"/><rect x="779" y="491" width="1" height="56"/><rect x="780" y="492" width="1" height="55"/><rect x="781" y="491" width="1" height="56"/><rect x="782" y="492" width="1" height="55"/><rect x="783" y="493" width="1" height="54"/><rect x="784" y="487" width="1" height="60"/><rect x="785" y="492" width="1" height="55"/><rect x="786" y="492" width="1" height="55"/><rect x="787" y="493" width="1" height="54"/><rect x="788" y="493" width="1" height="54"/><rect x="789" y="497" width="1" height="50"/><rect x="790" y="496" width="1" height="51"/><rect x="791" y="496" width="1" height="51"/><rect x="792" y="493" width="1" height="54"/><rect x="793" y="481" width="1" height="66"/><rect x="794" y="492" width="1" height="55"/><rect x="795" y="496" width="1" height="51"/><rect x="796" y="493" width="1" height="54"/><rect x="797" y="494" width="1" height="53"/><rect x="798" y="489" width="1" height="58"/><rect x="799" y="489" width="1" height="58"/><rect x="800" y="492" width="1" height="55"/><rect x="801" y="493" width="1" height="54"/><rect x="802" y="494" width="1" height="53"/><rect x="803" y="495" width="1" height="52"/><rect x="804" y="491" width="1" height="56"/><rect x="805" y="498" width="1" height="49"/><rect x="806" y="494" width="1" height="53"/><rect x="807" y="491" width="1" height="56"/><rect x="808" y="490" width="1" height="57"/><rect x="809" y="493" width="1" height="54"/><rect x="810" y="490" width="1" height="57"/><rect x="811" y="494" width="1" height="53"/><rect x="812" y="490" width="1" height="57"/><rect x="813" y="493" width="1" height="54"/><rect x="814" y="487" width="1" height="60"/><rect x="815" y="491" width="1" height="56"/><rect x="816" y="495" width="1" height="52"/><rect x="817" y="491" width="1" height="56"/><rect x="818" y="485" width="1" height="62"/><rect x="819" y="488" width="1" height="59"/><rect x="820" y="492" width="1" height="55"/><rect x="821" y="493" width="1" height="54"/><rect x="822" y="494" width="1" height="53"/><rect x="823" y="498" width="1" height="49"/><rect x="824" y="498" width="1" height="49"/><rect x="825" y="495" width="1" height="52"/><rect x="826" y="490" width="1" height="57"/><rect x="827" y="492" width="1" height="55"/><rect x="828" y="493" width="1" height="54"/><rect x="829" y="492" width="1" height="55"/><rect x="830" y="490" width="1" height="57"/><rect x="831" y="494" width="1" height="53"/><rect x="832" y="492" width="1" height="55"/><rect x="833" y="494" width="1" height="53"/><rect x="834" y="489" width="1" height="58"/><rect x="835" y="493" width="1" height="54"/><rect x="836" y="491" width="1" height="56"/><rect x="837" y="489" width="1" height="58"/><rect x="838" y="493" width="1" height="54"/><rect x="839" y="489" width="1" height="58"/><rect x="840" y="490" width="1" height="57"/><rect x="841" y="490" width="1" height="57"/><rect x="842" y="487" width="1" height="60"/><rect x="843" y="487" width="1" height="60"/><rect x="844" y="492" width="1" height="55"/><rect x="845" y="491" width="1" height="56"/><rect x="846" y="485" width="1" height="62"/><rect x="847" y="490" width="1" height="57"/><rect x="848" y="491" width="1" height="56"/><rect x="849" y="486" width="1" height="61"/><rect x="850" y="489" width="1" height="58"/><rect x="851" y="496" width="1" height="51"/><rect x="852" y="491" width="1" height="56"/><rect x="853" y="491" width="1" height="56"/><rect x="854" y="487" width="1" height="60"/><rect x="855" y="489" width="1" height="58"/><rect x="856" y="484" width="1" height="63"/><rect x="857" y="491" width="1" height="56"/><rect x="858" y="492" width="1" height="55"/><rect x="859" y="491" width="1" height="56"/><rect x="860" y="495" width="1" height="52"/><rect x="861" y="494" width="1" height="53"/><rect x="862" y="495" width="1" height="52"/><rect x="863" y="490" width="1" height="57"/><rect x="864" y="486" width="1" height="61"/><rect x="865" y="491" width="1" height="56"/><rect x="866" y="485" width="1" height="62"/><rect x="867" y="493" width="1" height="54"/><rect x="868" y="491" width="1" height="56"/><rect x="869" y="496" width="1" height="51"/><rect x="870" y="491" width="1" height="56"/><rect x="871" y="491" width="1" height="56"/><rect x="872" y="492" width="1" height="55"/><rect x="873" y="494" width="1" height="53"/><rect x="874" y="490" width="1" height="57"/><rect x="875" y="489" width="1" height="58"/><rect x="876" y="492" width="1" height="55"/><rect x="877" y="491" width="1" height="56"/><rect x="878" y="492" width="1" height="55"/><rect x="879" y="492" width="1" height="55"/><rect x="880" y="484" width="1" height="63"/><rect x="881" y="487" width="1" height="60"/><rect x="882" y="485" width="1" height="62"/><rect x="883" y="494" width="1" height="53"/><rect x="884" y="486" width="1" height="61"/><rect x="885" y="485" width="1" height="62"/><rect x="886" y="492" width="1" height="55"/><rect x="887" y="491" width="1" height="56"/><rect x="888" y="492" width="1" height="55"/><rect x="889" y="493" width="1" height="54"/><rect x="890" y="493" width="1" height="54"/><rect x="891" y="495" width="1" height="52"/><rect x="892" y="493" width="1" height="54"/><rect x="893" y="488" width="1" height="59"/><rect x="894" y="489" width="1" height="58"/><rect x="895" y="493" width="1" height="54"/><rect x="896" y="494" width="1" height="53"/><rect x="897" y="486" width="1" height="61"/><rect x="898" y="483" width="1" height="64"/><rect x="899" y="486" width="1" height="61"/><rect x="900" y="492" width="1" height="55"/><rect x="901" y="491" width="1" height="56"/><rect x="902" y="497" width="1" height="50"/><rect x="903" y="486" width="1" height="61"/><rect x="904" y="487" width="1" height="60"/><rect x="905" y="488" width="1" height="59"/><rect x="906" y="491" width="1" height="56"/><rect x="907" y="489" width="1" height="58"/><rect x="908" y="488" width="1" height="59"/><rect x="909" y="490" width="1" height="57"/><rect x="910" y="490" width="1" height="57"/><rect x="911" y="487" width="1" height="60"/><rect x="912" y="492" width="1" height="55"/><rect x="913" y="492" width="1" height="55"/><rect x="914" y="492" width="1" height="55"/><rect x="915" y="493" width="1" height="54"/><rect x="916" y="494" width="1" height="53"/><rect x="917" y="494" width="1" height="53"/><rect x="918" y="496" width="1" height="51"/><rect x="919" y="495" width="1" height="52"/><rect x="920" y="492" width="1" height="55"/><rect x="921" y="490" width="1" height="57"/><rect x="922" y="491" width="1" height="56"/><rect x="923" y="492" width="1" height="55"/><rect x="924" y="488" width="1" height="59"/><rect x="925" y="490" width="1" height="57"/><rect x="926" y="498" width="1" height="49"/><rect x="927" y="492" width="1" height="55"/><rect x="928" y="490" width="1" height="57"/><rect x="929" y="493" width="1" height="54"/><rect x="930" y="492" width="1" height="55"/><rect x="931" y="492" width="1" height="55"/><rect x="932" y="493" width="1" height="54"/><rect x="933" y="492" width="1" height="55"/><rect x="934" y="489" width="1" height="58"/><rect x="935" y="493" width="1" height="54"/><rect x="936" y="492" width="1" height="55"/><rect x="937" y="492" width="1" height="55"/><rect x="938" y="495" width="1" height="52"/><rect x="939" y="492" width="1" height="55"/><rect x="940" y="483" width="1" height="64"/><rect x="941" y="487" width="1" height="60"/><rect x="942" y="488" width="1" height="59"/><rect x="943" y="486" width="1" height="61"/><rect x="944" y="487" width="1" height="60"/><rect x="945" y="493" width="1" height="54"/><rect x="946" y="496" width="1" height="51"/><rect x="947" y="493" width="1" height="54"/><rect x="948" y="492" width="1" height="55"/><rect x="949" y="492" width="1" height="55"/><rect x="950" y="494" width="1" height="53"/><rect x="951" y="492" width="1" height="55"/><rect x="952" y="488" width="1" height="59"/><rect x="953" y="487" width="1" height="60"/><rect x="954" y="494" width="1" height="53"/><rect x="955" y="494" width="1" height="53"/><rect x="956" y="489" width="1" height="58"/><rect x="957" y="492" width="1" height="55"/><rect x="958" y="494" width="1" height="53"/><rect x="959" y="492" width="1" height="55"/><rect x="960" y="493" width="1" height="54"/><rect x="961" y="489" width="1" height="58"/><rect x="962" y="485" width="1" height="62"/><rect x="963" y="490" width="1" height="57"/><rect x="964" y="490" width="1" height="57"/><rect x="965" y="491" width="1" height="56"/><rect x="966" y="489" width="1" height="58"/><rect x="967" y="491" width="1" height="56"/><rect x="968" y="493" width="1" height="54"/><rect x="969" y="489" width="1" height="58"/><rect x="970" y="491" width="1" height="56"/><rect x="971" y="491" width="1" height="56"/><rect x="972" y="490" width="1" height="57"/><rect x="973" y="497" width="1" height="50"/><rect x="974" y="484" width="1" height="63"/><rect x="975" y="494" width="1" height="53"/><rect x="976" y="493" width="1" height="54"/><rect x="977" y="494" width="1" height="53"/><rect x="978" y="493" width="1" height="54"/><rect x="979" y="493" width="1" height="54"/><rect x="980" y="489" width="1" height="58"/><rect x="981" y="491" width="1" height="56"/><rect x="982" y="488" width="1" height="59"/><rect x="983" y="487" width="1" height="60"/><rect x="984" y="490" width="1" height="57"/><rect x="985" y="487" width="1" height="60"/><rect x="986" y="488" width="1" height="59"/><rect x="987" y="489" width="1" height="58"/><rect x="988" y="491" width="1" height="56"/><rect x="989" y="488" width="1" height="59"/><rect x="990" y="488" width="1" height="59"/><rect x="991" y="493" width="1" height="54"/><rect x="992" y="490" width="1" height="57"/><rect x="993" y="486" width="1" height="61"/><rect x="994" y="492" width="1" height="55"/><rect x="995" y="493" width="1" height="54"/><rect x="996" y="491" width="1" height="56"/><rect x="997" y="487" width="1" height="60"/><rect x="998" y="487" width="1" height="60"/><rect x="999" y="489" width="1" height="58"/><rect x="1000" y="494" width="1" height="53"/><rect x="1001" y="493" width="1" height="54"/><rect x="1002" y="493" width="1" height="54"/><rect x="1003" y="486" width="1" height="61"/><rect x="1004" y="487" width="1" height="60"/><rect x="1005" y="492" width="1" height="55"/><rect x="1006" y="496" width="1" height="51"/><rect x="1007" y="490" width="1" height="57"/><rect x="1008" y="485" width="1" height="62"/><rect x="1009" y="491" width="1" height="56"/><rect x="1010" y="493" width="1" height="54"/><rect x="1011" y="488" width="1" height="59"/><rect x="1012" y="488" width="1" height="59"/><rect x="1013" y="493" width="1" height="54"/><rect x="1014" y="491" width="1" height="56"/><rect x="1015" y="494" width="1" height="53"/><rect x="1016" y="490" width="1" height="57"/><rect x="1017" y="487" width="1" height="60"/><rect x="1018" y="494" width="1" height="53"/><rect x="1019" y="493" width="1" height="54"/><rect x="1020" y="496" width="1" height="51"/><rect x="1021" y="490" width="1" height="57"/><rect x="1022" y="493" width="1" height="54"/><rect x="1023" y="489" width="1" height="58"/><rect x="1024" y="491" width="1" height="56"/><rect x="1025" y="488" width="1" height="59"/><rect x="1026" y="492" width="1" height="55"/><rect x="1027" y="486" width="1" height="61"/><rect x="1028" y="491" width="1" height="56"/><rect x="1029" y="490" width="1" height="57"/><rect x="1030" y="494" width="1" height="53"/><rect x="1031" y="493" width="1" height="54"/><rect x="1032" y="494" width="1" height="53"/><rect x="1033" y="486" width="1" height="61"/><rect x="1034" y="488" width="1" height="59"/><rect x="1035" y="484" width="1" height="63"/><rect x="1036" y="493" width="1" height="54"/><rect x="1037" y="493" width="1" height="54"/><rect x="1038" y="501" width="1" height="46"/><rect x="1039" y="496" width="1" height="51"/><rect x="1040" y="493" width="1" height="54"/><rect x="1041" y="494" width="1" height="53"/><rect x="1042" y="496" width="1" height="51"/><rect x="1043" y="486" width="1" height="61"/><rect x="1044" y="487" width="1" height="60"/><rect x="1045" y="487" width="1" height="60"/><rect x="1046" y="495" width="1" height="52"/><rect x="1047" y="495" width="1" height="52"/><rect x="1048" y="496" width="1" height="51"/><rect x="1049" y="491" width="1" height="56"/><rect x="1050" y="496" width="1" height="51"/><rect x="1051" y="493" width="1" height="54"/><rect x="1052" y="485" width="1" height="62"/><rect x="1053" y="490" width="1" height="57"/><rect x="1054" y="486" width="1" height="61"/><rect x="1055" y="492" width="1" height="55"/><rect x="1056" y="488" width="1" height="59"/><rect x="1057" y="492" width="1" height="55"/><rect x="1058" y="494" width="1" height="53"/><rect x="1059" y="492" width="1" height="55"/><rect x="1060" y="494" width="1" height="53"/><rect x="1061" y="494" width="1" height="53"/><rect x="1062" y="492" width="1" height="55"/><rect x="1063" y="492" width="1" height="55"/><rect x="1064" y="489" width="1" height="58"/><rect x="1065" y="486" width="1" height="61"/><rect x="1066" y="493" width="1" height="54"/><rect x="1067" y="493" width="1" height="54"/><rect x="1068" y="493" width="1" height="54"/><rect x="1069" y="492" width="1" height="55"/><rect x="1070" y="487" width="1" height="60"/><rect x="1071" y="489" width="1" height="58"/><rect x="1072" y="487" width="1" height="60"/><rect x="1073" y="485" width="1" height="62"/><rect x="1074" y="487" width="1" height="60"/><rect x="1075" y="486" width="1" height="61"/><rect x="1076" y="484" width="1" height="63"/><rect x="1077" y="491" width="1" height="56"/><rect x="1078" y="491" width="1" height="56"/><rect x="1079" y="493" width="1" height="54"/><rect x="1080" y="486" width="1" height="61"/><rect x="1081" y="485" width="1" height="62"/><rect x="1082" y="492" width="1" height="55"/><rect x="1188" y="488" width="1" height="59"/><rect x="1189" y="495" width="1" height="52"/><rect x="1190" y="493" width="1" height="54"/><rect x="1191" y="489" width="1" height="58"/><rect x="1192" y="488" width="1" height="59"/><rect x="1193" y="484" width="1" height="63"/><rect x="1194" y="490" width="1" height="57"/><rect x="1195" y="486" width="1" height="61"/><rect x="1196" y="488" width="1" height="59"/><rect x="1197" y="489" width="1" height="58"/><rect x="1198" y="485" width="1" height="62"/><rect x="1199" y="486" width="1" height="61"/><rect x="1200" y="486" width="1" height="61"/><rect x="1201" y="486" width="1" height="61"/><rect x="1202" y="489" width="1" height="58"/><rect x="1203" y="490" width="1" height="57"/><rect x="1204" y="494" width="1" height="53"/><rect x="1205" y="496" width="1" height="51"/><rect x="1206" y="487" width="1" height="60"/><rect x="1207" y="489" width="1" height="58"/><rect x="1208" y="490" width="1" height="57"/><rect x="1209" y="488" width="1" height="59"/><rect x="1210" y="487" width="1" height="60"/><rect x="1211" y="490" width="1" height="57"/><rect x="1212" y="490" width="1" height="57"/><rect x="1213" y="492" width="1" height="55"/><rect x="1214" y="492" width="1" height="55"/><rect x="1215" y="487" width="1" height="60"/><rect x="1216" y="488" width="1" height="59"/><rect x="1217" y="491" width="1" height="56"/><rect x="1218" y="494" width="1" height="53"/><rect x="1219" y="495" width="1" height="52"/><rect x="1220" y="488" width="1" height="59"/><rect x="1221" y="490" width="1" height="57"/><rect x="1222" y="491" width="1" height="56"/><rect x="1223" y="486" width="1" height="61"/><rect x="1224" y="487" width="1" height="60"/><rect x="1225" y="486" width="1" height="61"/><rect x="1226" y="485" width="1" height="62"/><rect x="1227" y="487" width="1" height="60"/><rect x="1228" y="483" width="1" height="64"/><rect x="1229" y="487" width="1" height="60"/><rect x="1230" y="491" width="1" height="56"/><rect x="1231" y="489" width="1" height="58"/><rect x="1232" y="492" width="1" height="55"/><rect x="1233" y="489" width="1" height="58"/><rect x="1234" y="486" width="1" height="61"/><rect x="1235" y="494" width="1" height="53"/><rect x="1236" y="494" width="1" height="53"/><rect x="1237" y="490" width="1" height="57"/><rect x="1238" y="487" width="1" height="60"/><rect x="1239" y="487" width="1" height="60"/><rect x="1240" y="483" width="1" height="64"/><rect x="1241" y="491" width="1" height="56"/><rect x="1242" y="494" width="1" height="53"/><rect x="1243" y="494" width="1" height="53"/><rect x="1244" y="493" width="1" height="54"/><rect x="1245" y="492" width="1" height="55"/><rect x="1246" y="494" width="1" height="53"/><rect x="1247" y="490" width="1" height="57"/><rect x="1248" y="489" width="1" height="58"/><rect x="1249" y="490" width="1" height="57"/><rect x="1250" y="491" width="1" height="56"/><rect x="1251" y="489" width="1" height="58"/><rect x="1252" y="492" width="1" height="55"/><rect x="1253" y="492" width="1" height="55"/><rect x="1254" y="491" width="1" height="56"/><rect x="1255" y="489" width="1" height="58"/><rect x="1256" y="491" width="1" height="56"/><rect x="1257" y="490" width="1" height="57"/><rect x="1258" y="486" width="1" height="61"/><rect x="1259" y="486" width="1" height="61"/><rect x="1260" y="491" width="1" height="56"/><rect x="1261" y="490" width="1" height="57"/><rect x="1262" y="494" width="1" height="53"/><rect x="1263" y="491" width="1" height="56"/><rect x="1264" y="487" width="1" height="60"/><rect x="1265" y="487" width="1" height="60"/><rect x="1266" y="490" width="1" height="57"/><rect x="1267" y="494" width="1" height="53"/><rect x="1268" y="491" width="1" height="56"/><rect x="1269" y="491" width="1" height="56"/><rect x="1270" y="486" width="1" height="61"/><rect x="1271" y="481" width="1" height="66"/><rect x="1272" y="483" width="1" height="64"/><rect x="1273" y="483" width="1" height="64"/><rect x="1274" y="488" width="1" height="59"/><rect x="1275" y="488" width="1" height="59"/><rect x="1276" y="490" width="1" height="57"/><rect x="1277" y="485" width="1" height="62"/><rect x="1278" y="492" width="1" height="55"/><rect x="1279" y="494" width="1" height="53"/><rect x="1280" y="490" width="1" height="57"/><rect x="1281" y="491" width="1" height="56"/><rect x="1282" y="489" width="1" height="58"/><rect x="1283" y="494" width="1" height="53"/><rect x="1284" y="494" width="1" height="53"/><rect x="1285" y="487" width="1" height="60"/><rect x="1286" y="484" width="1" height="63"/><rect x="1287" y="486" width="1" height="61"/><rect x="1288" y="488" width="1" height="59"/><rect x="1289" y="490" width="1" height="57"/><rect x="1290" y="489" width="1" height="58"/><rect x="1291" y="487" width="1" height="60"/><rect x="1292" y="487" width="1" height="60"/><rect x="1293" y="490" width="1" height="57"/><rect x="1294" y="488" width="1" height="59"/><rect x="1295" y="485" width="1" height="62"/><rect x="1296" y="489" width="1" height="58"/><rect x="1297" y="488" width="1" height="59"/><rect x="1298" y="491" width="1" height="56"/><rect x="1299" y="491" width="1" height="56"/><rect x="1300" y="489" width="1" height="58"/><rect x="1301" y="486" width="1" height="61"/><rect x="1302" y="486" width="1" height="61"/><rect x="1303" y="488" width="1" height="59"/><rect x="1304" y="491" width="1" height="56"/><rect x="1305" y="487" width="1" height="60"/><rect x="1306" y="493" width="1" height="54"/><rect x="1307" y="486" width="1" height="61"/><rect x="1308" y="489" width="1" height="58"/><rect x="1309" y="487" width="1" height="60"/><rect x="1310" y="486" width="1" height="61"/><rect x="1311" y="488" width="1" height="59"/><rect x="1312" y="491" width="1" height="56"/><rect x="1313" y="487" width="1" height="60"/><rect x="1314" y="490" width="1" height="57"/><rect x="1315" y="489" width="1" height="58"/><rect x="1316" y="487" width="1" height="60"/><rect x="1317" y="488" width="1" height="59"/><rect x="1318" y="489" width="1" height="58"/><rect x="1319" y="485" width="1" height="62"/><rect x="1320" y="495" width="1" height="52"/><rect x="1321" y="488" width="1" height="59"/><rect x="1322" y="489" width="1" height="58"/><rect x="1323" y="495" width="1" height="52"/><rect x="1324" y="492" width="1" height="55"/><rect x="1325" y="492" width="1" height="55"/><rect x="1326" y="484" width="1" height="63"/><rect x="1327" y="493" width="1" height="54"/><rect x="1328" y="490" width="1" height="57"/><rect x="1329" y="494" width="1" height="53"/><rect x="1330" y="492" width="1" height="55"/><rect x="1331" y="487" width="1" height="60"/><rect x="1332" y="490" width="1" height="57"/><rect x="1333" y="487" width="1" height="60"/><rect x="1334" y="490" width="1" height="57"/><rect x="1335" y="487" width="1" height="60"/><rect x="1336" y="488" width="1" height="59"/><rect x="1337" y="488" width="1" height="59"/><rect x="1338" y="492" width="1" height="55"/><rect x="1339" y="488" width="1" height="59"/><rect x="1340" y="486" width="1" height="61"/><rect x="1341" y="487" width="1" height="60"/><rect x="1342" y="495" width="1" height="52"/><rect x="1343" y="493" width="1" height="54"/><rect x="1344" y="491" width="1" height="56"/><rect x="1345" y="490" width="1" height="57"/><rect x="1346" y="486" width="1" height="61"/><rect x="1347" y="488" width="1" height="59"/><rect x="1348" y="488" width="1" height="59"/><rect x="1349" y="489" width="1" height="58"/><rect x="1350" y="487" width="1" height="60"/><rect x="1351" y="486" width="1" height="61"/><rect x="1352" y="489" width="1" height="58"/><rect x="1353" y="491" width="1" height="56"/><rect x="1354" y="494" width="1" height="53"/><rect x="1355" y="494" width="1" height="53"/><rect x="1356" y="491" width="1" height="56"/><rect x="1357" y="497" width="1" height="50"/><rect x="1358" y="489" width="1" height="58"/><rect x="1359" y="494" width="1" height="53"/><rect x="1360" y="489" width="1" height="58"/><rect x="1361" y="485" width="1" height="62"/><rect x="1362" y="485" width="1" height="62"/><rect x="1363" y="489" width="1" height="58"/><rect x="1364" y="490" width="1" height="57"/><rect x="1365" y="491" width="1" height="56"/><rect x="1366" y="486" width="1" height="61"/><rect x="1367" y="487" width="1" height="60"/><rect x="1368" y="490" width="1" height="57"/><rect x="1369" y="485" width="1" height="62"/><rect x="1370" y="488" width="1" height="59"/><rect x="1371" y="488" width="1" height="59"/><rect x="1372" y="487" width="1" height="60"/><rect x="1373" y="488" width="1" height="59"/><rect x="1374" y="489" width="1" height="58"/><rect x="1375" y="487" width="1" height="60"/><rect x="1376" y="488" width="1" height="59"/><rect x="1377" y="489" width="1" height="58"/><rect x="1378" y="492" width="1" height="55"/><rect x="1379" y="491" width="1" height="56"/><rect x="1380" y="491" width="1" height="56"/><rect x="1381" y="491" width="1" height="56"/><rect x="1382" y="490" width="1" height="57"/><rect x="1383" y="494" width="1" height="53"/><rect x="1384" y="489" width="1" height="58"/><rect x="1385" y="496" width="1" height="51"/><rect x="1386" y="498" width="1" height="49"/><rect x="1387" y="489" width="1" height="58"/><rect x="1388" y="492" width="1" height="55"/><rect x="1389" y="494" width="1" height="53"/><rect x="1390" y="489" width="1" height="58"/><rect x="1391" y="481" width="1" height="66"/><rect x="1392" y="483" width="1" height="64"/><rect x="1393" y="485" width="1" height="62"/><rect x="1394" y="484" width="1" height="63"/><rect x="1395" y="488" width="1" height="59"/><rect x="1396" y="489" width="1" height="58"/><rect x="1397" y="491" width="1" height="56"/><rect x="1398" y="490" width="1" height="57"/><rect x="1399" y="479" width="1" height="68"/><rect x="1400" y="489" width="1" height="58"/><rect x="1401" y="483" width="1" height="64"/><rect x="1402" y="485" width="1" height="62"/><rect x="1403" y="488" width="1" height="59"/><rect x="1404" y="490" width="1" height="57"/><rect x="1405" y="491" width="1" height="56"/><rect x="1406" y="492" width="1" height="55"/><rect x="1407" y="490" width="1" height="57"/><rect x="1408" y="490" width="1" height="57"/><rect x="1409" y="490" width="1" height="57"/><rect x="1410" y="491" width="1" height="56"/><rect x="1411" y="488" width="1" height="59"/><rect x="1412" y="490" width="1" height="57"/><rect x="1413" y="490" width="1" height="57"/><rect x="1414" y="490" width="1" height="57"/><rect x="1415" y="489" width="1" height="58"/><rect x="1416" y="489" width="1" height="58"/><rect x="1417" y="483" width="1" height="64"/><rect x="1418" y="488" width="1" height="59"/><rect x="1419" y="485" width="1" height="62"/><rect x="1420" y="489" width="1" height="58"/><rect x="1421" y="492" width="1" height="55"/><rect x="1422" y="488" width="1" height="59"/><rect x="1423" y="489" width="1" height="58"/><rect x="1424" y="487" width="1" height="60"/><rect x="1425" y="493" width="1" height="54"/><rect x="1426" y="485" width="1" height="62"/><rect x="1427" y="488" width="1" height="59"/><rect x="1428" y="481" width="1" height="66"/><rect x="1429" y="485" width="1" height="62"/><rect x="1430" y="485" width="1" height="62"/><rect x="1431" y="486" width="1" height="61"/><rect x="1432" y="491" width="1" height="56"/><rect x="1433" y="483" width="1" height="64"/><rect x="1434" y="485" width="1" height="62"/><rect x="1435" y="487" width="1" height="60"/><rect x="1436" y="488" width="1" height="59"/><rect x="1437" y="489" width="1" height="58"/><rect x="1438" y="484" width="1" height="63"/><rect x="1439" y="488" width="1" height="59"/><rect x="1440" y="487" width="1" height="60"/><rect x="1441" y="488" width="1" height="59"/><rect x="1442" y="490" width="1" height="57"/><rect x="1443" y="487" width="1" height="60"/><rect x="1444" y="488" width="1" height="59"/><rect x="1445" y="491" width="1" height="56"/><rect x="1446" y="495" width="1" height="52"/><rect x="1447" y="490" width="1" height="57"/><rect x="1448" y="482" width="1" height="65"/><rect x="1449" y="487" width="1" height="60"/><rect x="1450" y="486" width="1" height="61"/><rect x="1451" y="485" width="1" height="62"/><rect x="1452" y="490" width="1" height="57"/><rect x="1453" y="488" width="1" height="59"/><rect x="1454" y="483" width="1" height="64"/><rect x="1455" y="486" width="1" height="61"/><rect x="1456" y="491" width="1" height="56"/><rect x="1457" y="490" width="1" height="57"/><rect x="1458" y="489" width="1" height="58"/><rect x="1459" y="491" width="1" height="56"/><rect x="1460" y="485" width="1" height="62"/><rect x="1461" y="487" width="1" height="60"/><rect x="1462" y="476" width="1" height="71"/><rect x="1463" y="476" width="1" height="71"/><rect x="1464" y="484" width="1" height="63"/><rect x="1465" y="482" width="1" height="65"/><rect x="1466" y="485" width="1" height="62"/><rect x="1467" y="485" width="1" height="62"/><rect x="1468" y="486" width="1" height="61"/><rect x="1469" y="487" width="1" height="60"/><rect x="1470" y="489" width="1" height="58"/><rect x="1471" y="491" width="1" height="56"/><rect x="1472" y="483" width="1" height="64"/><rect x="1473" y="486" width="1" height="61"/><rect x="1474" y="495" width="1" height="52"/><rect x="1475" y="494" width="1" height="53"/><rect x="1476" y="489" width="1" height="58"/><rect x="1477" y="490" width="1" height="57"/><rect x="1478" y="492" width="1" height="55"/><rect x="1479" y="489" width="1" height="58"/><rect x="1480" y="490" width="1" height="57"/><rect x="1481" y="490" width="1" height="57"/><rect x="1482" y="488" width="1" height="59"/><rect x="1483" y="480" width="1" height="67"/><rect x="1484" y="488" width="1" height="59"/><rect x="1485" y="488" width="1" height="59"/><rect x="1486" y="483" width="1" height="64"/><rect x="1487" y="487" width="1" height="60"/><rect x="1488" y="486" width="1" height="61"/><rect x="1489" y="488" width="1" height="59"/><rect x="1490" y="491" width="1" height="56"/><rect x="1491" y="487" width="1" height="60"/><rect x="1492" y="486" width="1" height="61"/><rect x="1493" y="487" width="1" height="60"/><rect x="1494" y="486" width="1" height="61"/><rect x="1495" y="488" width="1" height="59"/><rect x="1496" y="484" width="1" height="63"/><rect x="1497" y="484" width="1" height="63"/><rect x="1498" y="487" width="1" height="60"/><rect x="1499" y="486" width="1" height="61"/><rect x="1500" y="487" width="1" height="60"/><rect x="1501" y="490" width="1" height="57"/><rect x="1502" y="487" width="1" height="60"/><rect x="1503" y="488" width="1" height="59"/><rect x="1504" y="489" width="1" height="58"/><rect x="1505" y="487" width="1" height="60"/><rect x="1506" y="487" width="1" height="60"/><rect x="1507" y="486" width="1" height="61"/><rect x="1508" y="484" width="1" height="63"/><rect x="1509" y="485" width="1" height="62"/><rect x="1510" y="487" width="1" height="60"/><rect x="1511" y="484" width="1" height="63"/><rect x="1512" y="489" width="1" height="58"/><rect x="1513" y="491" width="1" height="56"/><rect x="1514" y="487" width="1" height="60"/><rect x="1515" y="490" width="1" height="57"/><rect x="1516" y="490" width="1" height="57"/><rect x="1517" y="486" width="1" height="61"/><rect x="1518" y="490" width="1" height="57"/><rect x="1519" y="485" width="1" height="62"/><rect x="1520" y="488" width="1" height="59"/><rect x="1521" y="484" width="1" height="63"/><rect x="1522" y="480" width="1" height="67"/><rect x="1523" y="485" width="1" height="62"/><rect x="1524" y="486" width="1" height="61"/><rect x="1525" y="485" width="1" height="62"/><rect x="1526" y="489" width="1" height="58"/><rect x="1527" y="487" width="1" height="60"/><rect x="1528" y="482" width="1" height="65"/><rect x="1529" y="484" width="1" height="63"/><rect x="1530" y="483" width="1" height="64"/><rect x="1531" y="488" width="1" height="59"/><rect x="1532" y="489" width="1" height="58"/><rect x="1533" y="485" width="1" height="62"/><rect x="1534" y="488" width="1" height="59"/><rect x="1535" y="490" width="1" height="57"/><rect x="1536" y="489" width="1" height="58"/><rect x="1537" y="490" width="1" height="57"/><rect x="1538" y="485" width="1" height="62"/><rect x="1539" y="484" width="1" height="63"/><rect x="1540" y="484" width="1" height="63"/><rect x="1541" y="484" width="1" height="63"/><rect x="1542" y="480" width="1" height="67"/><rect x="1543" y="482" width="1" height="65"/><rect x="1544" y="480" width="1" height="67"/><rect x="1545" y="482" width="1" height="65"/><rect x="1546" y="478" width="1" height="69"/><rect x="1547" y="483" width="1" height="64"/><rect x="1548" y="482" width="1" height="65"/><rect x="1549" y="482" width="1" height="65"/><rect x="1550" y="485" width="1" height="62"/><rect x="1551" y="482" width="1" height="65"/><rect x="1552" y="488" width="1" height="59"/><rect x="1553" y="487" width="1" height="60"/><rect x="1554" y="463" width="1" height="84"/><rect x="1555" y="438" width="1" height="109"/><rect x="1556" y="484" width="1" height="63"/><rect x="1557" y="482" width="1" height="65"/><rect x="1558" y="487" width="1" height="60"/><rect x="1559" y="483" width="1" height="64"/><rect x="1560" y="488" width="1" height="59"/><rect x="1561" y="481" width="1" height="66"/><rect x="1562" y="485" width="1" height="62"/><rect x="1563" y="485" width="1" height="62"/><rect x="1564" y="488" width="1" height="59"/><rect x="1565" y="484" width="1" height="63"/><rect x="1566" y="484" width="1" height="63"/><rect x="1567" y="487" width="1" height="60"/><rect x="1568" y="488" width="1" height="59"/><rect x="1569" y="487" width="1" height="60"/><rect x="1570" y="485" width="1" height="62"/><rect x="1571" y="485" width="1" height="62"/><rect x="1572" y="479" width="1" height="68"/><rect x="1573" y="481" width="1" height="66"/><rect x="1574" y="480" width="1" height="67"/><rect x="1575" y="476" width="1" height="71"/><rect x="1576" y="487" width="1" height="60"/><rect x="1577" y="485" width="1" height="62"/><rect x="1578" y="483" width="1" height="64"/><rect x="1579" y="478" width="1" height="69"/><rect x="1580" y="482" width="1" height="65"/><rect x="1581" y="482" width="1" height="65"/><rect x="1582" y="481" width="1" height="66"/><rect x="1583" y="484" width="1" height="63"/><rect x="1584" y="480" width="1" height="67"/><rect x="1585" y="486" width="1" height="61"/><rect x="1586" y="485" width="1" height="62"/><rect x="1587" y="485" width="1" height="62"/><rect x="1588" y="484" width="1" height="63"/><rect x="1589" y="480" width="1" height="67"/><rect x="1590" y="479" width="1" height="68"/><rect x="1591" y="477" width="1" height="70"/><rect x="1592" y="478" width="1" height="69"/><rect x="1593" y="478" width="1" height="69"/><rect x="1594" y="479" width="1" height="68"/><rect x="1595" y="482" width="1" height="65"/><rect x="1596" y="485" width="1" height="62"/><rect x="1597" y="485" width="1" height="62"/><rect x="1598" y="488" width="1" height="59"/><rect x="1599" y="483" width="1" height="64"/><rect x="1600" y="478" width="1" height="69"/><rect x="1601" y="477" width="1" height="70"/><rect x="1602" y="485" width="1" height="62"/><rect x="1603" y="485" width="1" height="62"/><rect x="1604" y="491" width="1" height="56"/><rect x="1605" y="486" width="1" height="61"/><rect x="1606" y="482" width="1" height="65"/><rect x="1607" y="486" width="1" height="61"/><rect x="1608" y="483" width="1" height="64"/><rect x="1609" y="482" width="1" height="65"/><rect x="1610" y="478" width="1" height="69"/><rect x="1611" y="476" width="1" height="71"/><rect x="1612" y="486" width="1" height="61"/><rect x="1613" y="478" width="1" height="69"/><rect x="1614" y="484" width="1" height="63"/><rect x="1615" y="481" width="1" height="66"/><rect x="1616" y="480" width="1" height="67"/><rect x="1617" y="477" width="1" height="70"/><rect x="1618" y="483" width="1" height="64"/><rect x="1619" y="484" width="1" height="63"/><rect x="1620" y="483" width="1" height="64"/><rect x="1621" y="486" width="1" height="61"/><rect x="1622" y="485" width="1" height="62"/><rect x="1623" y="485" width="1" height="62"/><rect x="1624" y="487" width="1" height="60"/><rect x="1625" y="481" width="1" height="66"/><rect x="1626" y="480" width="1" height="67"/><rect x="1627" y="483" width="1" height="64"/><rect x="1628" y="485" width="1" height="62"/><rect x="1629" y="484" width="1" height="63"/><rect x="1630" y="481" width="1" height="66"/><rect x="1631" y="480" width="1" height="67"/><rect x="1632" y="484" width="1" height="63"/><rect x="1633" y="483" width="1" height="64"/><rect x="1634" y="484" width="1" height="63"/><rect x="1635" y="482" width="1" height="65"/><rect x="1636" y="481" width="1" height="66"/><rect x="1637" y="481" width="1" height="66"/><rect x="1638" y="482" width="1" height="65"/><rect x="1639" y="483" width="1" height="64"/><rect x="1640" y="482" width="1" height="65"/><rect x="1641" y="486" width="1" height="61"/><rect x="1642" y="484" width="1" height="63"/><rect x="1643" y="482" width="1" height="65"/><rect x="1644" y="486" width="1" height="61"/><rect x="1645" y="484" width="1" height="63"/><rect x="1646" y="485" width="1" height="62"/><rect x="1647" y="485" width="1" height="62"/><rect x="1648" y="484" width="1" height="63"/><rect x="1649" y="484" width="1" height="63"/><rect x="1650" y="482" width="1" height="65"/><rect x="1651" y="483" width="1" height="64"/><rect x="1652" y="482" width="1" height="65"/><rect x="1653" y="485" width="1" height="62"/><rect x="1654" y="483" width="1" height="64"/><rect x="1655" y="483" width="1" height="64"/><rect x="1656" y="484" width="1" height="63"/><rect x="1657" y="482" width="1" height="65"/><rect x="1658" y="483" width="1" height="64"/><rect x="1659" y="484" width="1" height="63"/><rect x="1660" y="482" width="1" height="65"/><rect x="1661" y="480" width="1" height="67"/><rect x="1662" y="476" width="1" height="71"/><rect x="1663" y="481" width="1" height="66"/><rect x="1664" y="481" width="1" height="66"/><rect x="1665" y="488" width="1" height="59"/></g><g fill="url(#g2)"><rect x="1083" y="490" width="1" height="57"/><rect x="1084" y="497" width="1" height="50"/><rect x="1085" y="496" width="1" height="51"/><rect x="1086" y="492" width="1" height="55"/><rect x="1087" y="490" width="1" height="57"/><rect x="1088" y="493" width="1" height="54"/><rect x="1089" y="485" width="1" height="62"/><rect x="1090" y="495" width="1" height="52"/><rect x="1091" y="496" width="1" height="51"/><rect x="1092" y="492" width="1" height="55"/><rect x="1093" y="488" width="1" height="59"/><rect x="1094" y="492" width="1" height="55"/><rect x="1095" y="484" width="1" height="63"/><rect x="1096" y="488" width="1" height="59"/><rect x="1097" y="488" width="1" height="59"/><rect x="1098" y="487" width="1" height="60"/><rect x="1099" y="490" width="1" height="57"/><rect x="1100" y="493" width="1" height="54"/><rect x="1101" y="492" width="1" height="55"/><rect x="1102" y="486" width="1" height="61"/><rect x="1103" y="485" width="1" height="62"/><rect x="1104" y="488" width="1" height="59"/><rect x="1105" y="483" width="1" height="64"/><rect x="1106" y="490" width="1" height="57"/><rect x="1107" y="489" width="1" height="58"/><rect x="1108" y="490" width="1" height="57"/><rect x="1109" y="484" width="1" height="63"/><rect x="1110" y="485" width="1" height="62"/><rect x="1111" y="493" width="1" height="54"/><rect x="1112" y="492" width="1" height="55"/><rect x="1113" y="493" width="1" height="54"/><rect x="1114" y="488" width="1" height="59"/><rect x="1115" y="491" width="1" height="56"/><rect x="1116" y="487" width="1" height="60"/><rect x="1117" y="485" width="1" height="62"/><rect x="1118" y="491" width="1" height="56"/><rect x="1119" y="492" width="1" height="55"/><rect x="1120" y="489" width="1" height="58"/><rect x="1121" y="483" width="1" height="64"/><rect x="1122" y="491" width="1" height="56"/><rect x="1123" y="491" width="1" height="56"/><rect x="1124" y="492" width="1" height="55"/><rect x="1125" y="494" width="1" height="53"/><rect x="1126" y="490" width="1" height="57"/><rect x="1127" y="489" width="1" height="58"/><rect x="1128" y="491" width="1" height="56"/><rect x="1129" y="491" width="1" height="56"/><rect x="1130" y="493" width="1" height="54"/><rect x="1131" y="491" width="1" height="56"/><rect x="1132" y="490" width="1" height="57"/><rect x="1133" y="488" width="1" height="59"/><rect x="1134" y="495" width="1" height="52"/><rect x="1135" y="488" width="1" height="59"/><rect x="1136" y="488" width="1" height="59"/><rect x="1137" y="487" width="1" height="60"/><rect x="1138" y="492" width="1" height="55"/><rect x="1139" y="493" width="1" height="54"/><rect x="1140" y="492" width="1" height="55"/><rect x="1141" y="493" width="1" height="54"/><rect x="1142" y="492" width="1" height="55"/><rect x="1143" y="492" width="1" height="55"/><rect x="1144" y="491" width="1" height="56"/><rect x="1145" y="492" width="1" height="55"/><rect x="1146" y="491" width="1" height="56"/><rect x="1147" y="485" width="1" height="62"/><rect x="1148" y="491" width="1" height="56"/><rect x="1149" y="492" width="1" height="55"/><rect x="1150" y="491" width="1" height="56"/><rect x="1151" y="492" width="1" height="55"/><rect x="1152" y="491" width="1" height="56"/><rect x="1153" y="490" width="1" height="57"/><rect x="1154" y="490" width="1" height="57"/><rect x="1155" y="489" width="1" height="58"/><rect x="1156" y="487" width="1" height="60"/><rect x="1157" y="488" width="1" height="59"/><rect x="1158" y="488" width="1" height="59"/><rect x="1159" y="482" width="1" height="65"/><rect x="1160" y="489" width="1" height="58"/><rect x="1161" y="492" width="1" height="55"/><rect x="1162" y="491" width="1" height="56"/><rect x="1163" y="489" width="1" height="58"/><rect x="1164" y="485" width="1" height="62"/><rect x="1165" y="491" width="1" height="56"/><rect x="1166" y="492" width="1" height="55"/><rect x="1167" y="493" width="1" height="54"/><rect x="1168" y="494" width="1" height="53"/><rect x="1169" y="490" width="1" height="57"/><rect x="1170" y="490" width="1" height="57"/><rect x="1171" y="491" width="1" height="56"/><rect x="1172" y="490" width="1" height="57"/><rect x="1173" y="486" width="1" height="61"/><rect x="1174" y="491" width="1" height="56"/><rect x="1175" y="491" width="1" height="56"/><rect x="1176" y="492" width="1" height="55"/><rect x="1177" y="489" width="1" height="58"/><rect x="1178" y="491" width="1" height="56"/><rect x="1179" y="494" width="1" height="53"/><rect x="1180" y="494" width="1" height="53"/><rect x="1181" y="492" width="1" height="55"/><rect x="1182" y="492" width="1" height="55"/><rect x="1183" y="484" width="1" height="63"/><rect x="1184" y="491" width="1" height="56"/><rect x="1185" y="485" width="1" height="62"/><rect x="1186" y="486" width="1" height="61"/><rect x="1187" y="484" width="1" height="63"/></g><rect x="0" y="483" width="1083" height="1" fill="#fff" fill-opacity=".1"/><rect x="1188" y="483" width="478" height="1" fill="#fff" fill-opacity=".1"/><rect x="0" y="508" width="1083" height="1" fill="#fff" fill-opacity=".1"/><rect x="1188" y="508" width="478" height="1" fill="#fff" fill-opacity=".1"/><rect x="97" y="470" width="1" height="77" fill="#fff" fill-opacity=".12"/><rect x="296" y="470" width="1" height="77" fill="#fff" fill-opacity=".12"/><rect x="494" y="470" width="1" height="77" fill="#fff" fill-opacity=".12"/><rect x="693" y="470" width="1" height="77" fill="#fff" fill-opacity=".12"/><rect x="892" y="470" width="1" height="77" fill="#fff" fill-opacity=".12"/><rect x="1290" y="470" width="1" height="77" fill="#fff" fill-opacity=".12"/><rect x="1489" y="470" width="1" height="77" fill="#fff" fill-opacity=".12"/><text x="2.3" y="489" font-family="Liberation Sans" font-size="14.7" fill="#c8fff0" fill-opacity=".5">-120</text><text x="2.3" y="514" font-family="Liberation Sans" font-size="14.7" fill="#c8fff0" fill-opacity=".5">-130</text><rect x="1071" y="177" width="1" height="390" fill="#ff0"/><rect x="1188" y="177" width="1" height="390" fill="#ff0"/><rect x="1190" y="177" width="1" height="390" fill="#f00"/><g stroke="#f00" stroke-width="5" fill="none" shape-rendering="auto"><path d="M1468 403.5L1540 453"/><path d="M1517.5 416.5L1540 453"/><path d="M1492 446.5L1541 455"/></g></svg>
<div class="pl" style="left:2.3px;top:196px">-10</div>
<div class="pl" style="left:2.3px;top:222px">-20</div>
<div class="pl" style="left:2.3px;top:247px">-30</div>
<div class="pl" style="left:2.3px;top:273px">-40</div>
<div class="pl" style="left:2.3px;top:298px">-50</div>
<div class="pl" style="left:2.3px;top:324px">-60</div>
<div class="pl" style="left:2.3px;top:349px">-70</div>
<div class="pl" style="left:2.3px;top:375px">-80</div>
<div class="pl" style="left:2.3px;top:400px">-90</div>
<div class="pl" style="left:2.3px;top:426px">-100</div>
<div class="pl" style="left:2.3px;top:451px">-110</div>
<div class="pl" style="left:87.2px;top:552px">3,670</div>
<div class="pl" style="left:286.2px;top:552px">3,675</div>
<div class="pl" style="left:484.2px;top:552px">3,680</div>
<div class="pl" style="left:683.2px;top:552px">3,685</div>
<div class="pl" style="left:882.2px;top:552px">3,690</div>
<div class="pl" style="left:1081.2px;top:552px">3,695</div>
<div class="pl" style="left:1280.2px;top:552px">3,700</div>
<div class="pl" style="left:1479.2px;top:552px">3,705</div>
<div class="b" style="left:10px;top:577px"><span>MIN</span></div>
<div class="b on" style="left:70px;top:577px"><span>CTR</span></div>
<div class="b" style="left:130px;top:577px"><span>LOG</span></div>
<div class="b" style="left:210px;top:577px"><span>NR</span></div>
<div class="b" style="left:270px;top:577px"><span>ANF</span></div>
<div class="b" style="left:330px;top:577px"><span>NB</span></div>
<div class="b" style="left:390px;top:577px"><span>NB2</span></div>
<div class="b on" style="left:450px;top:577px"><span>SR</span></div>
<div class="b" style="left:510px;top:577px"><span>BCI</span></div>
<div class="b" style="left:570px;top:577px"><span>BIN</span></div>
<div class="b" style="left:630px;top:577px"><span>SQL</span></div>
<div class="b" style="left:1356px;top:577px"><span>MRX</span></div>
<div class="b on" style="left:1416px;top:577px"><span>VFOA</span></div>
<div class="b" style="left:1476px;top:577px"><span>VFOB</span></div>
<div class="b" style="left:1536px;top:577px"><span>RIT</span></div>
<div class="b" style="left:1596px;top:577px"><span>XIT</span></div>
<div class="sp" style="left:690px;top:577px;width:59px;height:22px"><span class="dg">132</span><div class="sb u"><i></i></div><div class="sb d"><i></i></div></div>
<div class="a" style="left:760px;top:587px;width:104px;height:4px;background:#000"></div><div class="a" style="left:760px;top:597px;width:104px;height:4px;background:#000"></div>
<div class="cb" style="left:10px;top:627px;width:179px;height:25px;line-height:25px"><span style="letter-spacing:0.25px">Panadapter</span><div class="db"><i></i></div></div>
<div class="b on" style="left:210px;top:627px"><span>STX</span></div>
<div class="b on" style="left:270px;top:627px"><span>AVG</span></div>
<div class="b" style="left:330px;top:627px"><span>Peak</span></div>
<div class="b" style="left:610px;top:627px"><span>Center</span></div>
<div class="cb" style="left:410px;top:627px;width:89px;height:24px;line-height:22px"><span style="letter-spacing:-0.05px">Signal</span><div class="db"><i></i></div></div>
<div class="cb" style="left:500px;top:627px;width:89px;height:24px;line-height:22px"><span style="letter-spacing:-0.36px">Fwd Pwr</span><div class="db"><i></i></div></div>
<div class="l" style="left:674.3px;top:634px;transform:scaleX(1.0662);transform-origin:0 0">Смещение:</div>
<div class="l" style="left:1441.2px;top:634px;transform:scaleX(1.0726);transform-origin:0 0">Масштаб:</div>
<div class="b" style="left:10px;top:677px"><span>160</span></div>
<div class="b on" style="left:70px;top:677px"><span>80</span></div>
<div class="b" style="left:130px;top:677px"><span>60</span></div>
<div class="b" style="left:10px;top:707px"><span>40</span></div>
<div class="b" style="left:70px;top:707px"><span>30</span></div>
<div class="b" style="left:130px;top:707px"><span>20</span></div>
<div class="b" style="left:10px;top:737px"><span>17</span></div>
<div class="b" style="left:70px;top:737px"><span>15</span></div>
<div class="b" style="left:130px;top:737px"><span>12</span></div>
<div class="b" style="left:10px;top:767px"><span>10</span></div>
<div class="b" style="left:70px;top:767px"><span>6</span></div>
<div class="b dis" style="left:130px;top:767px"><span>2</span></div>
<div class="b" style="left:10px;top:797px"><span>GEN</span></div>
<div class="b" style="left:70px;top:797px"><span>WWV</span></div>
<div class="b" style="left:130px;top:797px"><span>VHF+</span></div>
<div class="b" style="left:210px;top:677px"><span>USB</span></div>
<div class="b" style="left:270px;top:677px"><span>CWU</span></div>
<div class="b" style="left:330px;top:677px"><span>DIGU</span></div>
<div class="b on" style="left:210px;top:707px"><span>LSB</span></div>
<div class="b" style="left:270px;top:707px"><span>CWL</span></div>
<div class="b" style="left:330px;top:707px"><span>DIGL</span></div>
<div class="b" style="left:210px;top:737px"><span>AM</span></div>
<div class="b" style="left:270px;top:737px"><span>FMN</span></div>
<div class="b" style="left:330px;top:737px"><span>DRM</span></div>
<div class="b" style="left:210px;top:767px"><span>SAM</span></div>
<div class="b" style="left:270px;top:767px"><span>DSB</span></div>
<div class="b" style="left:330px;top:767px"><span>SPEC</span></div>
<div class="b" style="left:210px;top:797px"><span></span></div>
<div class="b" style="left:270px;top:797px"><span></span></div>
<div class="b" style="left:330px;top:797px"><span></span></div>
<div class="b" style="left:410px;top:677px"><span>5.0k</span></div>
<div class="b" style="left:470px;top:677px"><span>4.4k</span></div>
<div class="b" style="left:530px;top:677px"><span>3.8k</span></div>
<div class="b" style="left:410px;top:707px"><span>3.3k</span></div>
<div class="b" style="left:470px;top:707px"><span>2.9k</span></div>
<div class="b on" style="left:530px;top:707px"><span>2.7k</span></div>
<div class="b" style="left:410px;top:737px"><span>2.4k</span></div>
<div class="b" style="left:470px;top:737px"><span>2.1k</span></div>
<div class="b" style="left:530px;top:737px"><span>1.8k</span></div>
<div class="b" style="left:410px;top:767px"><span>1.0k</span></div>
<div class="b" style="left:470px;top:767px"><span>Var 1</span></div>
<div class="b" style="left:530px;top:767px"><span>Var 2</span></div>
<div class="b" style="left:410px;top:797px"><span></span></div>
<div class="b" style="left:470px;top:797px"><span>Var 2</span></div>
<div class="b" style="left:530px;top:797px"><span>Reset</span></div>
<div class="a" style="left:769px;top:640px;width:658px;height:3px;border-top:1px solid #404040;background:#fff;border-right:1px solid #fff"></div><div class="a" style="left:769px;top:642px;width:657px;height:1px;background:#ece9e0"></div>
<svg class="a" style="left:1092px;top:629px" width="13" height="27" viewBox="0 0 13 27" shape-rendering="crispEdges"><path d="M0 0H13V20L6.5 26L0 20Z" fill="#404040"/><path d="M0 0H12V20L6.0 25L0 20Z" fill="#fff"/><path d="M1 1H12V20L6.5 24.5L1 20Z" fill="#808080"/><path d="M1 1H11V19.5L6.0 23.5L1 19.5Z" fill="#d4d0c8"/></svg>
<div class="a" style="left:775px;top:656px;width:1px;height:1px;background:#000"></div><div class="a" style="left:807px;top:656px;width:1px;height:1px;background:#000"></div><div class="a" style="left:840px;top:656px;width:1px;height:1px;background:#000"></div><div class="a" style="left:872px;top:656px;width:1px;height:1px;background:#000"></div><div class="a" style="left:904px;top:656px;width:1px;height:1px;background:#000"></div><div class="a" style="left:936px;top:656px;width:1px;height:1px;background:#000"></div><div class="a" style="left:969px;top:656px;width:1px;height:1px;background:#000"></div><div class="a" style="left:1001px;top:656px;width:1px;height:1px;background:#000"></div><div class="a" style="left:1033px;top:656px;width:1px;height:1px;background:#000"></div><div class="a" style="left:1065px;top:656px;width:1px;height:1px;background:#000"></div><div class="a" style="left:1098px;top:656px;width:1px;height:1px;background:#000"></div><div class="a" style="left:1130px;top:656px;width:1px;height:1px;background:#000"></div><div class="a" style="left:1162px;top:656px;width:1px;height:1px;background:#000"></div><div class="a" style="left:1194px;top:656px;width:1px;height:1px;background:#000"></div><div class="a" style="left:1227px;top:656px;width:1px;height:1px;background:#000"></div><div class="a" style="left:1259px;top:656px;width:1px;height:1px;background:#000"></div><div class="a" style="left:1291px;top:656px;width:1px;height:1px;background:#000"></div><div class="a" style="left:1323px;top:656px;width:1px;height:1px;background:#000"></div><div class="a" style="left:1356px;top:656px;width:1px;height:1px;background:#000"></div><div class="a" style="left:1388px;top:656px;width:1px;height:1px;background:#000"></div><div class="a" style="left:1420px;top:656px;width:1px;height:1px;background:#000"></div>
<div class="a" style="left:1526px;top:640px;width:122px;height:3px;border-top:1px solid #404040;background:#fff;border-right:1px solid #fff"></div><div class="a" style="left:1526px;top:642px;width:121px;height:1px;background:#ece9e0"></div>
<svg class="a" style="left:1525px;top:629px" width="13" height="27" viewBox="0 0 13 27" shape-rendering="crispEdges"><path d="M0 0H13V20L6.5 26L0 20Z" fill="#404040"/><path d="M0 0H12V20L6.0 25L0 20Z" fill="#fff"/><path d="M1 1H12V20L6.5 24.5L1 20Z" fill="#808080"/><path d="M1 1H11V19.5L6.0 23.5L1 19.5Z" fill="#d4d0c8"/></svg>
<div class="a" style="left:1531px;top:656px;width:1px;height:1px;background:#000"></div><div class="a" style="left:1569px;top:656px;width:1px;height:1px;background:#000"></div><div class="a" style="left:1607px;top:656px;width:1px;height:1px;background:#000"></div><div class="a" style="left:1640px;top:656px;width:1px;height:1px;background:#000"></div>
<div class="l" style="left:633.7px;top:674px;transform:scaleX(1.1074);transform-origin:0 0">АРУ (Тип)</div>
<div class="l" style="left:787.7px;top:674px;transform:scaleX(1.0374);transform-origin:0 0">Предусиление</div>
<div class="l" style="left:1149.7px;top:674px;transform:scaleX(1.0130);transform-origin:0 0">Transmit Profile:</div>
<div class="cb" style="left:610px;top:697px;width:120px;height:24px;line-height:22px"><span style="letter-spacing:-0.31px">Custom</span><div class="db"><i></i></div></div>
<div class="cb" style="left:780px;top:697px;width:120px;height:24px;line-height:22px"><span style="letter-spacing:-0.18px">Low</span><div class="db"><i></i></div></div>
<div class="cb" style="left:1140px;top:697px;width:129px;height:24px;line-height:22px"><span style="letter-spacing:-0.05px">ESSB</span><div class="db"><i></i></div></div>
<div class="l" style="left:611.7px;top:744px;transform:scaleX(1.0888);transform-origin:0 0">AF:</div>
<div class="l" style="left:611.7px;top:774px;transform:scaleX(1.1468);transform-origin:0 0">AGC-T:</div>
<div class="l" style="left:611.7px;top:804px;transform:scaleX(1.0872);transform-origin:0 0">Drive:</div>
<div class="a" style="left:679px;top:750px;width:152px;height:3px;border-top:1px solid #404040;background:#fff;border-right:1px solid #fff"></div><div class="a" style="left:679px;top:752px;width:151px;height:1px;background:#ece9e0"></div>
<svg class="a" style="left:683px;top:739px" width="13" height="27" viewBox="0 0 13 27" shape-rendering="crispEdges"><path d="M0 0H13V20L6.5 26L0 20Z" fill="#404040"/><path d="M0 0H12V20L6.0 25L0 20Z" fill="#fff"/><path d="M1 1H12V20L6.5 24.5L1 20Z" fill="#808080"/><path d="M1 1H11V19.5L6.0 23.5L1 19.5Z" fill="#d4d0c8"/></svg>
<div class="a" style="left:679px;top:780px;width:152px;height:3px;border-top:1px solid #404040;background:#fff;border-right:1px solid #fff"></div><div class="a" style="left:679px;top:782px;width:151px;height:1px;background:#ece9e0"></div>
<svg class="a" style="left:786px;top:769px" width="13" height="27" viewBox="0 0 13 27" shape-rendering="crispEdges"><path d="M0 0H13V20L6.5 26L0 20Z" fill="#404040"/><path d="M0 0H12V20L6.0 25L0 20Z" fill="#fff"/><path d="M1 1H12V20L6.5 24.5L1 20Z" fill="#808080"/><path d="M1 1H11V19.5L6.0 23.5L1 19.5Z" fill="#d4d0c8"/></svg>
<div class="a" style="left:679px;top:810px;width:152px;height:3px;border-top:1px solid #404040;background:#fff;border-right:1px solid #fff"></div><div class="a" style="left:679px;top:812px;width:151px;height:1px;background:#ece9e0"></div>
<svg class="a" style="left:749px;top:799px" width="13" height="27" viewBox="0 0 13 27" shape-rendering="crispEdges"><path d="M0 0H13V20L6.5 26L0 20Z" fill="#404040"/><path d="M0 0H12V20L6.0 25L0 20Z" fill="#fff"/><path d="M1 1H12V20L6.5 24.5L1 20Z" fill="#808080"/><path d="M1 1H11V19.5L6.0 23.5L1 19.5Z" fill="#d4d0c8"/></svg>
<div class="sp" style="left:840px;top:737px;width:59px;height:22px"><span class="dg">3</span><div class="sb u"><i></i></div><div class="sb d"><i></i></div></div>
<div class="sp" style="left:840px;top:767px;width:59px;height:22px"><span class="dg">88</span><div class="sb u"><i></i></div><div class="sb d"><i></i></div></div>
<div class="sp" style="left:840px;top:797px;width:59px;height:22px"><span class="dg">50</span><div class="sb u"><i></i></div><div class="sb d"><i></i></div></div>
<div class="a" style="left:967px;top:684px;width:106px;height:3px;border-top:1px solid #404040;background:#fff;border-right:1px solid #fff"></div><div class="a" style="left:967px;top:686px;width:105px;height:1px;background:#ece9e0"></div>
<svg class="a" style="left:1016px;top:677px" width="9" height="19" viewBox="0 0 9 19" shape-rendering="crispEdges"><path d="M0 0H9V14L4.5 18L0 14Z" fill="#404040"/><path d="M0 0H8V14L4.0 17L0 14Z" fill="#fff"/><path d="M1 1H8V14L4.5 16.5L1 14Z" fill="#808080"/><path d="M1 1H7V13.5L4.0 15.5L1 13.5Z" fill="#d4d0c8"/></svg>
<div class="a" style="left:971px;top:697px;width:1px;height:3px;background:#000"></div><div class="a" style="left:995px;top:697px;width:1px;height:3px;background:#000"></div><div class="a" style="left:1020px;top:697px;width:1px;height:3px;background:#000"></div><div class="a" style="left:1044px;top:697px;width:1px;height:3px;background:#000"></div><div class="a" style="left:1068px;top:697px;width:1px;height:3px;background:#000"></div>
<div class="a" style="left:967px;top:726px;width:106px;height:3px;border-top:1px solid #404040;background:#fff;border-right:1px solid #fff"></div><div class="a" style="left:967px;top:728px;width:105px;height:1px;background:#ece9e0"></div>
<svg class="a" style="left:1016px;top:719px" width="9" height="19" viewBox="0 0 9 19" shape-rendering="crispEdges"><path d="M0 0H9V14L4.5 18L0 14Z" fill="#404040"/><path d="M0 0H8V14L4.0 17L0 14Z" fill="#fff"/><path d="M1 1H8V14L4.5 16.5L1 14Z" fill="#808080"/><path d="M1 1H7V13.5L4.0 15.5L1 13.5Z" fill="#d4d0c8"/></svg>
<div class="a" style="left:971px;top:739px;width:1px;height:3px;background:#000"></div><div class="a" style="left:995px;top:739px;width:1px;height:3px;background:#000"></div><div class="a" style="left:1020px;top:739px;width:1px;height:3px;background:#000"></div><div class="a" style="left:1044px;top:739px;width:1px;height:3px;background:#000"></div><div class="a" style="left:1068px;top:739px;width:1px;height:3px;background:#000"></div>
<div class="a" style="left:937px;top:699px;width:4px;height:42px;background:#fff;border-left:1px solid #606060;border-right:1px solid #404040"></div><div class="a" style="left:935px;top:740px;width:5px;height:1px;background:#fff"></div><svg class="a" style="left:932px;top:693px" width="15" height="8" viewBox="0 0 15 8" shape-rendering="crispEdges"><path d="M0 0H11L15 3.5L11 7H0Z" fill="#404040"/><path d="M0 0H11L14 3.5L11 6H0Z" fill="#fff"/><path d="M1 1H11L14 3.5L11 6H1Z" fill="#808080"/><path d="M1 1H10.5L13 3.5L10.5 5H1Z" fill="#d4d0c8"/></svg>
<div class="a" style="left:1097px;top:699px;width:4px;height:42px;background:#fff;border-left:1px solid #606060;border-right:1px solid #404040"></div><div class="a" style="left:1095px;top:740px;width:5px;height:1px;background:#fff"></div><svg class="a" style="left:1092px;top:693px" width="15" height="8" viewBox="0 0 15 8" shape-rendering="crispEdges"><path d="M0 0H11L15 3.5L11 7H0Z" fill="#404040"/><path d="M0 0H11L14 3.5L11 6H0Z" fill="#fff"/><path d="M1 1H11L14 3.5L11 6H1Z" fill="#808080"/><path d="M1 1H10.5L13 3.5L10.5 5H1Z" fill="#d4d0c8"/></svg>
<div class="a" style="left:1119px;top:727px;width:70px;height:20px;overflow:hidden;background:linear-gradient(#808080 0,#808080 1px,#f6f6f6 1px,#e2e2e2 2.5px,#b4b4b4 5px,#8c8a8a 10px,#4a4646 10.8px,#1d1919 11.6px,#242020 16px,#363232 18.5px,#4c4848 20px)"><div class="a" style="left:0;top:0;width:1px;height:20px;background:#332f2f"></div><div class="a" style="left:1px;top:1px;width:7px;height:19px;background:linear-gradient(rgba(255,255,255,.5),rgba(190,190,190,.55) 50%,rgba(150,150,150,.75) 55%,rgba(140,140,140,.8))"></div><div class="a" style="left:47px;top:0;width:2px;height:20px;background:#332f2f"></div><div class="a" style="left:49px;top:1px;width:7px;height:19px;background:linear-gradient(rgba(255,255,255,.5),rgba(190,190,190,.55) 50%,rgba(150,150,150,.75) 55%,rgba(140,140,140,.8))"></div></div><div class="a" style="left:1119px;top:730px;width:13px;height:13px;background:#fff;border:1px solid;border-color:#404040 #fff #fff #404040;box-shadow:inset 1px 1px 0 #404040,inset -1px -1px 0 #d4d0c8"></div><div class="a" style="left:1136.5px;top:728px;color:#fff;font-weight:bold;font-size:15px;line-height:19px;text-shadow:0 0 1px rgba(0,0,0,.55);letter-spacing:.2px">Swap</div>
<div class="b" style="left:920px;top:767px"><span>GATE</span></div>
<div class="sp" style="left:980px;top:767px;width:59px;height:22px"><span class="dg">-40</span><div class="sb u"><i></i></div><div class="sb d"><i></i></div></div>
<div class="b" style="left:1040px;top:767px"><span>VOX</span></div>
<div class="sp" style="left:1100px;top:767px;width:59px;height:22px"><span class="dg">200</span><div class="sb u"><i></i></div><div class="sb d"><i></i></div></div>
<div class="b" style="left:920px;top:797px"><span>DX</span></div>
<div class="sp" style="left:980px;top:797px;width:59px;height:22px"><span class="dg">3</span><div class="sb u"><i></i></div><div class="sb d"><i></i></div></div>
<div class="b" style="left:1040px;top:797px"><span>CPDR</span></div>
<div class="sp" style="left:1100px;top:797px;width:59px;height:22px"><span class="dg">3</span><div class="sb u"><i></i></div><div class="sb d"><i></i></div></div>
<div class="b" style="left:1160px;top:797px"><span>VAC</span></div>
<div class="a" style="left:0;top:843px;width:1674px;height:1px;background:#727272"></div><div class="a" style="left:0;top:844px;width:1674px;height:1px;background:#f8f8f8"></div>
<div class="a" id="st1" style="left:70px;top:851px;color:#f0f0f0;font-size:14px;line-height:17px;white-space:pre;letter-spacing:0.34px">-20517,6Hz  -101,4dBm  3,676 982 MHz</div>
<div class="a" id="st2" style="left:1479px;top:851px;color:#f0f0f0;font-size:14px;line-height:17px;white-space:pre;letter-spacing:0.36px">RAM: 2745Mb</div>
<div class="a" style="left:1577px;top:851px;width:79px;height:17px;overflow:hidden"><div class="a" id="st3" style="left:-3px;top:0;color:#f0f0f0;font-size:14px;line-height:17px;white-space:pre;letter-spacing:0.50px">CPU %: 11,7</div></div>
</body></html>
